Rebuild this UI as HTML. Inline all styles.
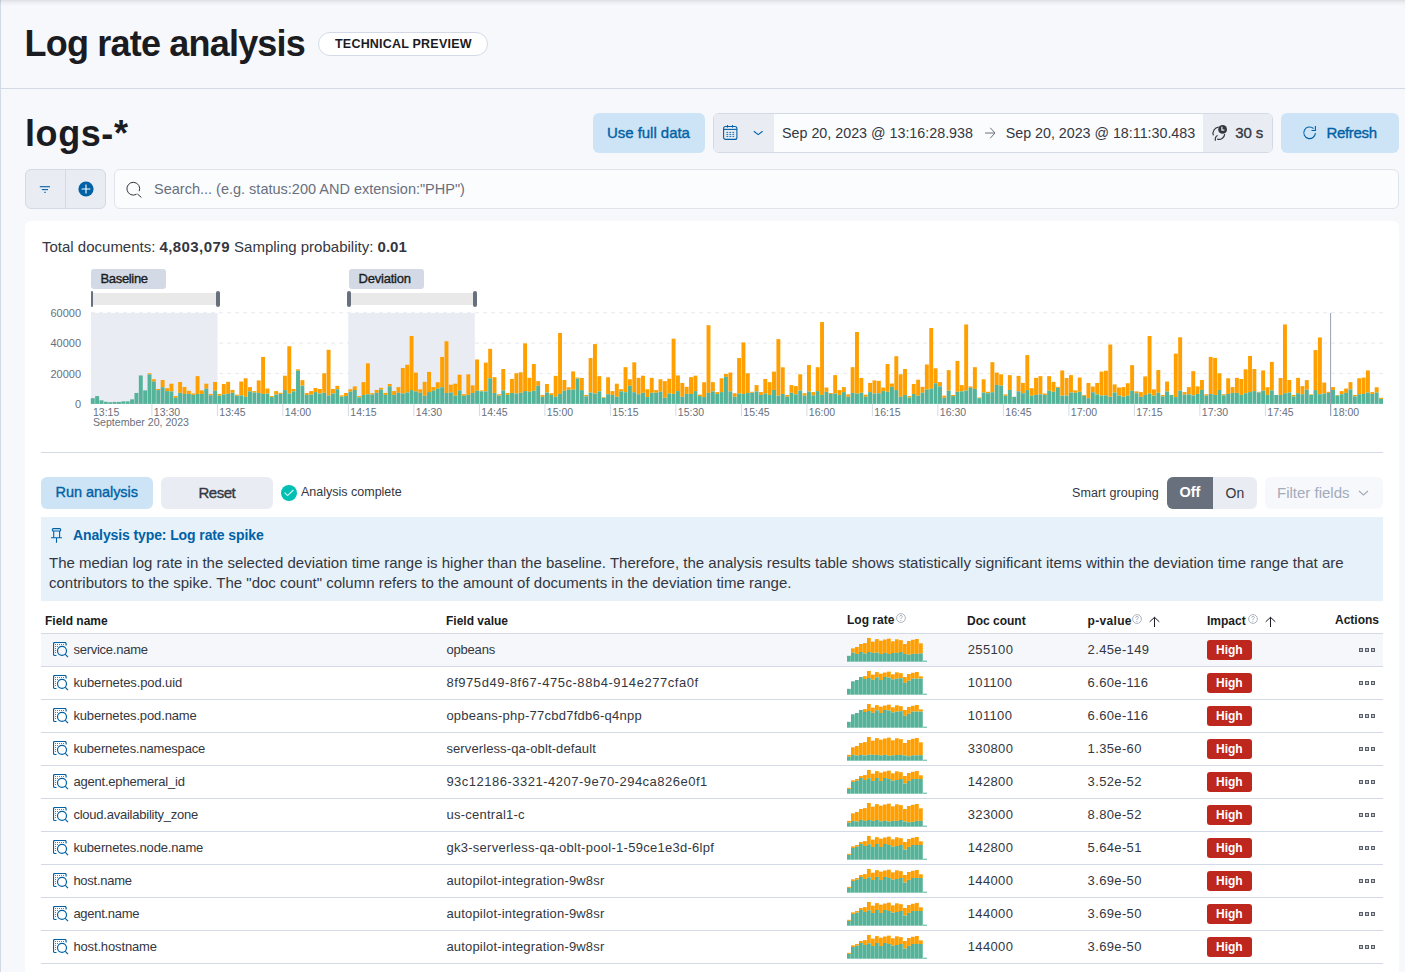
<!DOCTYPE html><html><head><meta charset="utf-8"><style>
*{box-sizing:border-box;margin:0;padding:0}
html,body{width:1405px;height:972px;overflow:hidden;background:#f7f8fc;font-family:"Liberation Sans", sans-serif;}
.a{position:absolute}
</style></head><body>

<div class="a" style="left:0;top:0;width:1px;height:972px;background:#d3dae6"></div>
<div class="a" style="left:0;top:0;width:1405px;height:6px;background:linear-gradient(rgba(40,45,60,0.13),rgba(40,45,60,0.05) 40%,rgba(40,45,60,0))"></div>
<div class="a" style="left:1px;top:88px;width:1404px;height:1px;background:#d3dae6"></div>
<div style="position:absolute;left:24.5px;top:21.93px;font-size:36px;line-height:43.20px;font-weight:700;color:#1a1c21;white-space:nowrap;letter-spacing:-0.8px">Log rate analysis</div>
<div class="a" style="left:318px;top:32px;width:170px;height:24px;border:1px solid #d3dae6;border-radius:12px;background:#fff"></div>
<div style="position:absolute;left:335px;top:36.97px;font-size:12.5px;line-height:15.00px;font-weight:700;color:#1a1c21;white-space:nowrap;;letter-spacing:0.211px;">TECHNICAL PREVIEW</div>
<div style="position:absolute;left:25px;top:111.93px;font-size:36px;line-height:43.20px;font-weight:700;color:#1a1c21;white-space:nowrap;;letter-spacing:0.584px;">logs-*</div>
<div class="a" style="left:593px;top:113px;width:112px;height:40px;border-radius:6px;background:#cce4f5"></div>
<div style="position:absolute;left:607px;top:124.30px;font-size:15px;line-height:18.00px;font-weight:400;color:#0061a6;white-space:nowrap;-webkit-text-stroke:0.35px currentColor;letter-spacing:-0.040px;">Use full data</div>
<div class="a" style="left:713px;top:113px;width:560px;height:40px;border:1px solid #d3dae6;border-radius:6px;background:#fbfcfd;overflow:hidden"><div class="a" style="left:0;top:0;width:60px;height:38px;background:#e9edf3"></div><div class="a" style="left:489px;top:0;width:70px;height:38px;background:#e9edf3"></div></div>
<svg class="a" style="left:721.5px;top:124.5px;" width="16" height="16" viewBox="0 0 16 16"><rect x="1.6" y="1.5" width="13.3" height="12.9" rx="2" fill="none" stroke="#0061a6" stroke-width="1.1"/><line x1="1.6" y1="4.4" x2="14.9" y2="4.4" stroke="#0061a6" stroke-width="1.1"/><line x1="5.5" y1="0" x2="5.5" y2="2.6" stroke="#0061a6" stroke-width="1.1"/><line x1="10.5" y1="0" x2="10.5" y2="2.6" stroke="#0061a6" stroke-width="1.1"/><rect x="4.4" y="6.9" width="1.8" height="0.9" fill="#0061a6"/><rect x="4.4" y="8.9" width="1.8" height="0.9" fill="#0061a6"/><rect x="4.4" y="10.9" width="1.8" height="0.9" fill="#0061a6"/><rect x="7.4" y="6.9" width="1.8" height="0.9" fill="#0061a6"/><rect x="7.4" y="8.9" width="1.8" height="0.9" fill="#0061a6"/><rect x="7.4" y="10.9" width="1.8" height="0.9" fill="#0061a6"/><rect x="10.4" y="6.9" width="1.8" height="0.9" fill="#0061a6"/><rect x="10.4" y="8.9" width="1.8" height="0.9" fill="#0061a6"/><rect x="10.4" y="10.9" width="1.8" height="0.9" fill="#0061a6"/></svg>
<svg class="a" style="left:752.5px;top:130px;" width="11" height="6" viewBox="0 0 11 6"><polyline points="0.8,1.2 5.2,4.6 9.6,1.2" fill="none" stroke="#0061a6" stroke-width="1.1"/></svg>
<div style="position:absolute;left:782px;top:125.17px;font-size:14.3px;line-height:17.16px;font-weight:400;color:#343741;white-space:nowrap;;letter-spacing:-0.002px;">Sep 20, 2023 @ 13:16:28.938</div>
<svg class="a" style="left:983.5px;top:126.5px;" width="12" height="12" viewBox="0 0 12 12"><path d="M1 6H11M6.3 0.8L11 6L6.3 11.2" fill="none" stroke="#69707d" stroke-width="1"/></svg>
<div style="position:absolute;left:1005.7px;top:125.17px;font-size:14.3px;line-height:17.16px;font-weight:400;color:#343741;white-space:nowrap;;letter-spacing:-0.018px;">Sep 20, 2023 @ 18:11:30.483</div>
<svg class="a" style="left:1211px;top:122px;" width="20" height="20" viewBox="0 0 20 20"><path d="M2.4 13.4A6.1 6.1 0 0 1 7.6 5.2" fill="none" stroke="#343741" stroke-width="1.2"/><path d="M13.7 12.1A5.8 5.8 0 0 1 6.2 17.1" fill="none" stroke="#343741" stroke-width="1.2"/><path d="M6.7 13.5Q3.9 14.5 4.3 18.8" fill="none" stroke="#343741" stroke-width="1.2"/><circle cx="11.6" cy="7.4" r="4.4" fill="#343741"/><path d="M10.9 4.7V8.2H13.4" fill="none" stroke="#e9edf3" stroke-width="1.2"/></svg>
<div style="position:absolute;left:1235.3px;top:124.30px;font-size:15px;line-height:18.00px;font-weight:400;color:#343741;white-space:nowrap;-webkit-text-stroke:0.35px currentColor;letter-spacing:-0.117px;">30 s</div>
<div class="a" style="left:1281px;top:113px;width:118px;height:40px;border-radius:6px;background:#cce4f5"></div>
<svg class="a" style="left:1302px;top:124px;" width="16" height="16" viewBox="0 0 16 16"><path d="M13.4 9A5.8 5.8 0 1 1 11.5 4.5" fill="none" stroke="#0061a6" stroke-width="1.1"/><path d="M13.4 2V6.5H9.5" fill="none" stroke="#0061a6" stroke-width="1.1"/></svg>
<div style="position:absolute;left:1326.5px;top:124.30px;font-size:15px;line-height:18.00px;font-weight:400;color:#0061a6;white-space:nowrap;-webkit-text-stroke:0.35px currentColor;letter-spacing:-0.333px;">Refresh</div>
<div class="a" style="left:25px;top:169px;width:81px;height:40px;border:1px solid #d3dae6;border-radius:6px;background:#e9edf3"></div>
<div class="a" style="left:65px;top:170px;width:1px;height:38px;background:#d3dae6"></div>
<svg class="a" style="left:39px;top:185px;" width="12" height="9" viewBox="0 0 12 9"><line x1="0.8" y1="1.7" x2="11" y2="1.7" stroke="#0061a6" stroke-width="1.1"/><line x1="2.8" y1="4.6" x2="9" y2="4.6" stroke="#0061a6" stroke-width="1.1"/><line x1="5.3" y1="7.4" x2="6.6" y2="7.4" stroke="#0061a6" stroke-width="1.1"/></svg>
<svg class="a" style="left:77.5px;top:180.5px;" width="16" height="16" viewBox="0 0 16 16"><circle cx="8" cy="8" r="7.6" fill="#0061a6"/><path d="M8 3.6V12.4M3.6 8H12.4" stroke="#fff" stroke-width="1.1"/></svg>
<div class="a" style="left:114px;top:169px;width:1285px;height:40px;border:1px solid #dfe3ea;border-radius:6px;background:#fbfcfd"></div>
<svg class="a" style="left:125px;top:181px;" width="18" height="18" viewBox="0 0 18 18"><path d="M11.6 13.2A6.4 6.4 0 1 1 14.2 10.2" fill="none" stroke="#343741" stroke-width="1"/><line x1="12.4" y1="13" x2="16.4" y2="16.4" stroke="#343741" stroke-width="1"/></svg>
<div style="position:absolute;left:154px;top:181.28px;font-size:14.5px;line-height:17.40px;font-weight:400;color:#69707d;white-space:nowrap;">Search... (e.g. status:200 AND extension:"PHP")</div>
<div class="a" style="left:25px;top:221px;width:1374px;height:800px;border-radius:6px;background:#fff"></div>
<div style="position:absolute;left:42px;top:237.80px;font-size:15px;line-height:18.00px;font-weight:400;color:#343741;white-space:nowrap;">Total documents: <b style="letter-spacing:0.4px">4,803,079</b> Sampling probability: <b style="letter-spacing:0.05px">0.01</b></div>
<div class="a" style="left:91px;top:269px;width:75px;height:20px;border-radius:3px;background:#d3dae6"></div>
<div style="position:absolute;left:100.5px;top:270.70px;font-size:13px;line-height:15.60px;font-weight:400;color:#1a1c21;white-space:nowrap;-webkit-text-stroke:0.35px currentColor;letter-spacing:-0.336px;">Baseline</div>
<div class="a" style="left:349px;top:269px;width:75px;height:20px;border-radius:3px;background:#d3dae6"></div>
<div style="position:absolute;left:358.5px;top:270.70px;font-size:13px;line-height:15.60px;font-weight:400;color:#1a1c21;white-space:nowrap;-webkit-text-stroke:0.35px currentColor;letter-spacing:-0.214px;">Deviation</div>
<div class="a" style="left:92px;top:293px;width:125px;height:12px;background:#e9e9ea"></div>
<div class="a" style="left:350px;top:293px;width:124px;height:12px;background:#e9e9ea"></div>
<div class="a" style="left:91px;top:291px;width:2px;height:16px;border-radius:2px;background:#69707d"></div>
<div class="a" style="left:215.7px;top:291px;width:4px;height:16px;border-radius:2px;background:#69707d"></div>
<div class="a" style="left:347px;top:291px;width:4px;height:16px;border-radius:2px;background:#69707d"></div>
<div class="a" style="left:473px;top:291px;width:4px;height:16px;border-radius:2px;background:#69707d"></div>
<svg style="position:absolute;left:0;top:0" width="1405" height="972"><line x1="91" y1="312.8" x2="1383" y2="312.8" stroke="#e6e9ef" stroke-width="1" stroke-dasharray="4 4"/><line x1="91" y1="343.1" x2="1383" y2="343.1" stroke="#e6e9ef" stroke-width="1" stroke-dasharray="4 4"/><line x1="91" y1="373.4" x2="1383" y2="373.4" stroke="#e6e9ef" stroke-width="1" stroke-dasharray="4 4"/><rect x="91" y="313" width="126.5" height="91" fill="#e9ecf2"/><rect x="348.3" y="313" width="126.5" height="91" fill="#e9ecf2"/><rect x="90.80" y="398.21" width="3.92" height="5.69" fill="#54b399"/><rect x="95.17" y="396.07" width="3.92" height="7.83" fill="#54b399"/><rect x="99.53" y="400.34" width="3.92" height="3.56" fill="#54b399"/><rect x="103.90" y="401.76" width="3.92" height="2.14" fill="#54b399"/><rect x="108.27" y="402.19" width="3.92" height="1.71" fill="#54b399"/><rect x="112.63" y="401.91" width="3.92" height="1.99" fill="#54b399"/><rect x="117.00" y="401.91" width="3.92" height="1.99" fill="#54b399"/><rect x="121.37" y="401.34" width="3.92" height="2.56" fill="#54b399"/><rect x="125.74" y="401.34" width="3.92" height="2.56" fill="#54b399"/><rect x="130.10" y="399.34" width="3.92" height="4.56" fill="#54b399"/><rect x="134.47" y="392.94" width="3.92" height="10.96" fill="#54b399"/><rect x="138.84" y="375.43" width="3.92" height="28.47" fill="#54b399"/><rect x="143.20" y="390.38" width="3.92" height="13.52" fill="#54b399"/><rect x="147.57" y="373.30" width="3.92" height="1.14" fill="#ffa000"/><rect x="147.57" y="374.43" width="3.92" height="29.47" fill="#54b399"/><rect x="151.94" y="379.27" width="3.92" height="2.28" fill="#ffa000"/><rect x="151.94" y="381.55" width="3.92" height="22.35" fill="#54b399"/><rect x="156.31" y="388.95" width="3.92" height="1.14" fill="#ffa000"/><rect x="156.31" y="390.09" width="3.92" height="13.81" fill="#54b399"/><rect x="160.67" y="379.99" width="3.92" height="7.26" fill="#ffa000"/><rect x="160.67" y="387.25" width="3.92" height="16.65" fill="#54b399"/><rect x="165.04" y="388.24" width="3.92" height="2.85" fill="#ffa000"/><rect x="165.04" y="391.09" width="3.92" height="12.81" fill="#54b399"/><rect x="169.41" y="383.69" width="3.92" height="7.83" fill="#ffa000"/><rect x="169.41" y="391.52" width="3.92" height="12.38" fill="#54b399"/><rect x="173.77" y="396.07" width="3.92" height="1.71" fill="#ffa000"/><rect x="173.77" y="397.78" width="3.92" height="6.12" fill="#54b399"/><rect x="178.14" y="381.98" width="3.92" height="10.82" fill="#ffa000"/><rect x="178.14" y="392.80" width="3.92" height="11.10" fill="#54b399"/><rect x="182.51" y="386.96" width="3.92" height="6.98" fill="#ffa000"/><rect x="182.51" y="393.94" width="3.92" height="9.96" fill="#54b399"/><rect x="186.87" y="390.80" width="3.92" height="3.13" fill="#ffa000"/><rect x="186.87" y="393.94" width="3.92" height="9.96" fill="#54b399"/><rect x="191.24" y="393.51" width="3.92" height="1.42" fill="#ffa000"/><rect x="191.24" y="394.93" width="3.92" height="8.97" fill="#54b399"/><rect x="195.61" y="376.14" width="3.92" height="17.79" fill="#ffa000"/><rect x="195.61" y="393.94" width="3.92" height="9.96" fill="#54b399"/><rect x="199.97" y="390.38" width="3.92" height="3.56" fill="#ffa000"/><rect x="199.97" y="393.94" width="3.92" height="9.96" fill="#54b399"/><rect x="204.34" y="383.69" width="3.92" height="4.98" fill="#ffa000"/><rect x="204.34" y="388.67" width="3.92" height="15.23" fill="#54b399"/><rect x="208.71" y="393.94" width="3.92" height="1.42" fill="#ffa000"/><rect x="208.71" y="395.36" width="3.92" height="8.54" fill="#54b399"/><rect x="213.08" y="381.98" width="3.92" height="8.68" fill="#ffa000"/><rect x="213.08" y="390.66" width="3.92" height="13.24" fill="#54b399"/><rect x="217.44" y="393.94" width="3.92" height="1.85" fill="#ffa000"/><rect x="217.44" y="395.79" width="3.92" height="8.11" fill="#54b399"/><rect x="221.81" y="383.97" width="3.92" height="10.39" fill="#ffa000"/><rect x="221.81" y="394.36" width="3.92" height="9.54" fill="#54b399"/><rect x="226.18" y="381.84" width="3.92" height="12.10" fill="#ffa000"/><rect x="226.18" y="393.94" width="3.92" height="9.96" fill="#54b399"/><rect x="230.54" y="389.95" width="3.92" height="2.85" fill="#ffa000"/><rect x="230.54" y="392.80" width="3.92" height="11.10" fill="#54b399"/><rect x="234.91" y="394.65" width="3.92" height="1.14" fill="#ffa000"/><rect x="234.91" y="395.79" width="3.92" height="8.11" fill="#54b399"/><rect x="239.28" y="381.55" width="3.92" height="13.81" fill="#ffa000"/><rect x="239.28" y="395.36" width="3.92" height="8.54" fill="#54b399"/><rect x="243.64" y="378.28" width="3.92" height="18.51" fill="#ffa000"/><rect x="243.64" y="396.78" width="3.92" height="7.12" fill="#54b399"/><rect x="248.01" y="387.10" width="3.92" height="4.27" fill="#ffa000"/><rect x="248.01" y="391.37" width="3.92" height="12.53" fill="#54b399"/><rect x="252.38" y="391.09" width="3.92" height="1.42" fill="#ffa000"/><rect x="252.38" y="392.51" width="3.92" height="11.39" fill="#54b399"/><rect x="256.75" y="380.41" width="3.92" height="12.53" fill="#ffa000"/><rect x="256.75" y="392.94" width="3.92" height="10.96" fill="#54b399"/><rect x="261.11" y="356.92" width="3.92" height="37.01" fill="#ffa000"/><rect x="261.11" y="393.94" width="3.92" height="9.96" fill="#54b399"/><rect x="265.48" y="388.53" width="3.92" height="4.98" fill="#ffa000"/><rect x="265.48" y="393.51" width="3.92" height="10.39" fill="#54b399"/><rect x="269.85" y="396.07" width="3.92" height="1.00" fill="#ffa000"/><rect x="269.85" y="397.07" width="3.92" height="6.83" fill="#54b399"/><rect x="274.21" y="391.09" width="3.92" height="3.56" fill="#ffa000"/><rect x="274.21" y="394.65" width="3.92" height="9.25" fill="#54b399"/><rect x="278.58" y="392.80" width="3.92" height="1.14" fill="#ffa000"/><rect x="278.58" y="393.94" width="3.92" height="9.96" fill="#54b399"/><rect x="282.95" y="375.71" width="3.92" height="14.38" fill="#ffa000"/><rect x="282.95" y="390.09" width="3.92" height="13.81" fill="#54b399"/><rect x="287.31" y="346.25" width="3.92" height="47.26" fill="#ffa000"/><rect x="287.31" y="393.51" width="3.92" height="10.39" fill="#54b399"/><rect x="291.68" y="388.95" width="3.92" height="2.42" fill="#ffa000"/><rect x="291.68" y="391.37" width="3.92" height="12.53" fill="#54b399"/><rect x="296.05" y="369.31" width="3.92" height="1.42" fill="#ffa000"/><rect x="296.05" y="370.73" width="3.92" height="33.17" fill="#54b399"/><rect x="300.42" y="380.13" width="3.92" height="5.55" fill="#ffa000"/><rect x="300.42" y="385.68" width="3.92" height="18.22" fill="#54b399"/><rect x="304.78" y="392.94" width="3.92" height="1.99" fill="#ffa000"/><rect x="304.78" y="394.93" width="3.92" height="8.97" fill="#54b399"/><rect x="309.15" y="391.09" width="3.92" height="3.56" fill="#ffa000"/><rect x="309.15" y="394.65" width="3.92" height="9.25" fill="#54b399"/><rect x="313.52" y="387.96" width="3.92" height="4.13" fill="#ffa000"/><rect x="313.52" y="392.09" width="3.92" height="11.81" fill="#54b399"/><rect x="317.88" y="388.95" width="3.92" height="4.56" fill="#ffa000"/><rect x="317.88" y="393.51" width="3.92" height="10.39" fill="#54b399"/><rect x="322.25" y="373.30" width="3.92" height="19.50" fill="#ffa000"/><rect x="322.25" y="392.80" width="3.92" height="11.10" fill="#54b399"/><rect x="326.62" y="349.81" width="3.92" height="45.55" fill="#ffa000"/><rect x="326.62" y="395.36" width="3.92" height="8.54" fill="#54b399"/><rect x="330.99" y="388.95" width="3.92" height="4.56" fill="#ffa000"/><rect x="330.99" y="393.51" width="3.92" height="10.39" fill="#54b399"/><rect x="335.35" y="385.82" width="3.92" height="3.42" fill="#ffa000"/><rect x="335.35" y="389.24" width="3.92" height="14.66" fill="#54b399"/><rect x="339.72" y="395.36" width="3.92" height="1.42" fill="#ffa000"/><rect x="339.72" y="396.78" width="3.92" height="7.12" fill="#54b399"/><rect x="344.09" y="392.94" width="3.92" height="3.13" fill="#ffa000"/><rect x="344.09" y="396.07" width="3.92" height="7.83" fill="#54b399"/><rect x="348.45" y="389.24" width="3.92" height="2.56" fill="#ffa000"/><rect x="348.45" y="391.80" width="3.92" height="12.10" fill="#54b399"/><rect x="352.82" y="386.39" width="3.92" height="3.56" fill="#ffa000"/><rect x="352.82" y="389.95" width="3.92" height="13.95" fill="#54b399"/><rect x="357.19" y="396.07" width="3.92" height="1.42" fill="#ffa000"/><rect x="357.19" y="397.49" width="3.92" height="6.41" fill="#54b399"/><rect x="361.55" y="382.12" width="3.92" height="12.81" fill="#ffa000"/><rect x="361.55" y="394.93" width="3.92" height="8.97" fill="#54b399"/><rect x="365.92" y="363.33" width="3.92" height="31.03" fill="#ffa000"/><rect x="365.92" y="394.36" width="3.92" height="9.54" fill="#54b399"/><rect x="370.29" y="393.22" width="3.92" height="1.42" fill="#ffa000"/><rect x="370.29" y="394.65" width="3.92" height="9.25" fill="#54b399"/><rect x="374.66" y="389.95" width="3.92" height="2.85" fill="#ffa000"/><rect x="374.66" y="392.80" width="3.92" height="11.10" fill="#54b399"/><rect x="379.02" y="387.81" width="3.92" height="1.85" fill="#ffa000"/><rect x="379.02" y="389.67" width="3.92" height="14.23" fill="#54b399"/><rect x="383.39" y="392.94" width="3.92" height="1.99" fill="#ffa000"/><rect x="383.39" y="394.93" width="3.92" height="8.97" fill="#54b399"/><rect x="387.76" y="383.97" width="3.92" height="2.42" fill="#ffa000"/><rect x="387.76" y="386.39" width="3.92" height="17.51" fill="#54b399"/><rect x="392.12" y="391.09" width="3.92" height="3.84" fill="#ffa000"/><rect x="392.12" y="394.93" width="3.92" height="8.97" fill="#54b399"/><rect x="396.49" y="387.10" width="3.92" height="5.69" fill="#ffa000"/><rect x="396.49" y="392.80" width="3.92" height="11.10" fill="#54b399"/><rect x="400.86" y="368.03" width="3.92" height="25.48" fill="#ffa000"/><rect x="400.86" y="393.51" width="3.92" height="10.39" fill="#54b399"/><rect x="405.22" y="364.75" width="3.92" height="27.76" fill="#ffa000"/><rect x="405.22" y="392.51" width="3.92" height="11.39" fill="#54b399"/><rect x="409.59" y="336.00" width="3.92" height="54.09" fill="#ffa000"/><rect x="409.59" y="390.09" width="3.92" height="13.81" fill="#54b399"/><rect x="413.96" y="372.58" width="3.92" height="18.93" fill="#ffa000"/><rect x="413.96" y="391.52" width="3.92" height="12.38" fill="#54b399"/><rect x="418.32" y="389.38" width="3.92" height="3.42" fill="#ffa000"/><rect x="418.32" y="392.80" width="3.92" height="11.10" fill="#54b399"/><rect x="422.69" y="381.84" width="3.92" height="13.95" fill="#ffa000"/><rect x="422.69" y="395.79" width="3.92" height="8.11" fill="#54b399"/><rect x="427.06" y="371.87" width="3.92" height="20.21" fill="#ffa000"/><rect x="427.06" y="392.09" width="3.92" height="11.81" fill="#54b399"/><rect x="431.43" y="387.10" width="3.92" height="3.56" fill="#ffa000"/><rect x="431.43" y="390.66" width="3.92" height="13.24" fill="#54b399"/><rect x="435.79" y="382.26" width="3.92" height="6.41" fill="#ffa000"/><rect x="435.79" y="388.67" width="3.92" height="15.23" fill="#54b399"/><rect x="440.16" y="356.92" width="3.92" height="30.32" fill="#ffa000"/><rect x="440.16" y="387.25" width="3.92" height="16.65" fill="#54b399"/><rect x="444.53" y="341.27" width="3.92" height="51.67" fill="#ffa000"/><rect x="444.53" y="392.94" width="3.92" height="10.96" fill="#54b399"/><rect x="448.89" y="384.68" width="3.92" height="7.83" fill="#ffa000"/><rect x="448.89" y="392.51" width="3.92" height="11.39" fill="#54b399"/><rect x="453.26" y="383.69" width="3.92" height="11.96" fill="#ffa000"/><rect x="453.26" y="395.64" width="3.92" height="8.26" fill="#54b399"/><rect x="457.63" y="374.72" width="3.92" height="15.66" fill="#ffa000"/><rect x="457.63" y="390.38" width="3.92" height="13.52" fill="#54b399"/><rect x="462.00" y="394.22" width="3.92" height="1.57" fill="#ffa000"/><rect x="462.00" y="395.79" width="3.92" height="8.11" fill="#54b399"/><rect x="466.36" y="374.29" width="3.92" height="20.64" fill="#ffa000"/><rect x="466.36" y="394.93" width="3.92" height="8.97" fill="#54b399"/><rect x="470.73" y="385.39" width="3.92" height="7.54" fill="#ffa000"/><rect x="470.73" y="392.94" width="3.92" height="10.96" fill="#54b399"/><rect x="475.10" y="359.49" width="3.92" height="31.17" fill="#ffa000"/><rect x="475.10" y="390.66" width="3.92" height="13.24" fill="#54b399"/><rect x="479.46" y="390.38" width="3.92" height="1.00" fill="#ffa000"/><rect x="479.46" y="391.37" width="3.92" height="12.53" fill="#54b399"/><rect x="483.83" y="362.62" width="3.92" height="28.75" fill="#ffa000"/><rect x="483.83" y="391.37" width="3.92" height="12.53" fill="#54b399"/><rect x="488.20" y="348.81" width="3.92" height="29.47" fill="#ffa000"/><rect x="488.20" y="378.28" width="3.92" height="25.62" fill="#54b399"/><rect x="492.56" y="377.14" width="3.92" height="15.80" fill="#ffa000"/><rect x="492.56" y="392.94" width="3.92" height="10.96" fill="#54b399"/><rect x="496.93" y="394.22" width="3.92" height="1.42" fill="#ffa000"/><rect x="496.93" y="395.64" width="3.92" height="8.26" fill="#54b399"/><rect x="501.30" y="369.02" width="3.92" height="21.35" fill="#ffa000"/><rect x="501.30" y="390.38" width="3.92" height="13.52" fill="#54b399"/><rect x="505.67" y="392.94" width="3.92" height="1.99" fill="#ffa000"/><rect x="505.67" y="394.93" width="3.92" height="8.97" fill="#54b399"/><rect x="510.03" y="378.99" width="3.92" height="13.95" fill="#ffa000"/><rect x="510.03" y="392.94" width="3.92" height="10.96" fill="#54b399"/><rect x="514.40" y="373.30" width="3.92" height="20.21" fill="#ffa000"/><rect x="514.40" y="393.51" width="3.92" height="10.39" fill="#54b399"/><rect x="518.77" y="372.30" width="3.92" height="20.50" fill="#ffa000"/><rect x="518.77" y="392.80" width="3.92" height="11.10" fill="#54b399"/><rect x="523.13" y="343.40" width="3.92" height="47.69" fill="#ffa000"/><rect x="523.13" y="391.09" width="3.92" height="12.81" fill="#54b399"/><rect x="527.50" y="377.85" width="3.92" height="13.95" fill="#ffa000"/><rect x="527.50" y="391.80" width="3.92" height="12.10" fill="#54b399"/><rect x="531.87" y="364.04" width="3.92" height="26.76" fill="#ffa000"/><rect x="531.87" y="390.80" width="3.92" height="13.10" fill="#54b399"/><rect x="536.23" y="381.12" width="3.92" height="4.70" fill="#ffa000"/><rect x="536.23" y="385.82" width="3.92" height="18.08" fill="#54b399"/><rect x="540.60" y="394.93" width="3.92" height="1.85" fill="#ffa000"/><rect x="540.60" y="396.78" width="3.92" height="7.12" fill="#54b399"/><rect x="544.97" y="383.97" width="3.92" height="8.54" fill="#ffa000"/><rect x="544.97" y="392.51" width="3.92" height="11.39" fill="#54b399"/><rect x="549.34" y="393.22" width="3.92" height="1.71" fill="#ffa000"/><rect x="549.34" y="394.93" width="3.92" height="8.97" fill="#54b399"/><rect x="553.70" y="375.86" width="3.92" height="20.93" fill="#ffa000"/><rect x="553.70" y="396.78" width="3.92" height="7.12" fill="#54b399"/><rect x="558.07" y="333.01" width="3.92" height="60.93" fill="#ffa000"/><rect x="558.07" y="393.94" width="3.92" height="9.96" fill="#54b399"/><rect x="562.44" y="379.99" width="3.92" height="10.82" fill="#ffa000"/><rect x="562.44" y="390.80" width="3.92" height="13.10" fill="#54b399"/><rect x="566.80" y="387.25" width="3.92" height="2.42" fill="#ffa000"/><rect x="566.80" y="389.67" width="3.92" height="14.23" fill="#54b399"/><rect x="571.17" y="371.44" width="3.92" height="18.22" fill="#ffa000"/><rect x="571.17" y="389.67" width="3.92" height="14.23" fill="#54b399"/><rect x="575.54" y="377.57" width="3.92" height="1.00" fill="#ffa000"/><rect x="575.54" y="378.56" width="3.92" height="25.34" fill="#54b399"/><rect x="579.90" y="377.99" width="3.92" height="12.10" fill="#ffa000"/><rect x="579.90" y="390.09" width="3.92" height="13.81" fill="#54b399"/><rect x="584.27" y="394.93" width="3.92" height="1.42" fill="#ffa000"/><rect x="584.27" y="396.36" width="3.92" height="7.54" fill="#54b399"/><rect x="588.64" y="358.06" width="3.92" height="34.45" fill="#ffa000"/><rect x="588.64" y="392.51" width="3.92" height="11.39" fill="#54b399"/><rect x="593.00" y="344.11" width="3.92" height="49.40" fill="#ffa000"/><rect x="593.00" y="393.51" width="3.92" height="10.39" fill="#54b399"/><rect x="597.37" y="376.14" width="3.92" height="15.23" fill="#ffa000"/><rect x="597.37" y="391.37" width="3.92" height="12.53" fill="#54b399"/><rect x="601.74" y="397.21" width="3.92" height="0.57" fill="#ffa000"/><rect x="601.74" y="397.78" width="3.92" height="6.12" fill="#54b399"/><rect x="606.11" y="377.28" width="3.92" height="16.94" fill="#ffa000"/><rect x="606.11" y="394.22" width="3.92" height="9.68" fill="#54b399"/><rect x="610.47" y="391.09" width="3.92" height="3.84" fill="#ffa000"/><rect x="610.47" y="394.93" width="3.92" height="8.97" fill="#54b399"/><rect x="614.84" y="383.69" width="3.92" height="13.10" fill="#ffa000"/><rect x="614.84" y="396.78" width="3.92" height="7.12" fill="#54b399"/><rect x="619.21" y="389.24" width="3.92" height="2.14" fill="#ffa000"/><rect x="619.21" y="391.37" width="3.92" height="12.53" fill="#54b399"/><rect x="623.57" y="367.17" width="3.92" height="25.05" fill="#ffa000"/><rect x="623.57" y="392.23" width="3.92" height="11.67" fill="#54b399"/><rect x="627.94" y="379.27" width="3.92" height="6.55" fill="#ffa000"/><rect x="627.94" y="385.82" width="3.92" height="18.08" fill="#54b399"/><rect x="632.31" y="362.33" width="3.92" height="29.89" fill="#ffa000"/><rect x="632.31" y="392.23" width="3.92" height="11.67" fill="#54b399"/><rect x="636.67" y="377.85" width="3.92" height="16.37" fill="#ffa000"/><rect x="636.67" y="394.22" width="3.92" height="9.68" fill="#54b399"/><rect x="641.04" y="375.71" width="3.92" height="17.08" fill="#ffa000"/><rect x="641.04" y="392.80" width="3.92" height="11.10" fill="#54b399"/><rect x="645.41" y="389.24" width="3.92" height="7.83" fill="#ffa000"/><rect x="645.41" y="397.07" width="3.92" height="6.83" fill="#54b399"/><rect x="649.78" y="377.85" width="3.92" height="14.95" fill="#ffa000"/><rect x="649.78" y="392.80" width="3.92" height="11.10" fill="#54b399"/><rect x="654.14" y="390.09" width="3.92" height="2.70" fill="#ffa000"/><rect x="654.14" y="392.80" width="3.92" height="11.10" fill="#54b399"/><rect x="658.51" y="379.27" width="3.92" height="12.53" fill="#ffa000"/><rect x="658.51" y="391.80" width="3.92" height="12.10" fill="#54b399"/><rect x="662.88" y="381.12" width="3.92" height="16.65" fill="#ffa000"/><rect x="662.88" y="397.78" width="3.92" height="6.12" fill="#54b399"/><rect x="667.24" y="378.70" width="3.92" height="14.80" fill="#ffa000"/><rect x="667.24" y="393.51" width="3.92" height="10.39" fill="#54b399"/><rect x="671.61" y="338.70" width="3.92" height="55.23" fill="#ffa000"/><rect x="671.61" y="393.94" width="3.92" height="9.96" fill="#54b399"/><rect x="675.98" y="375.43" width="3.92" height="15.66" fill="#ffa000"/><rect x="675.98" y="391.09" width="3.92" height="12.81" fill="#54b399"/><rect x="680.34" y="382.97" width="3.92" height="13.81" fill="#ffa000"/><rect x="680.34" y="396.78" width="3.92" height="7.12" fill="#54b399"/><rect x="684.71" y="386.82" width="3.92" height="7.12" fill="#ffa000"/><rect x="684.71" y="393.94" width="3.92" height="9.96" fill="#54b399"/><rect x="689.08" y="377.14" width="3.92" height="16.80" fill="#ffa000"/><rect x="689.08" y="393.94" width="3.92" height="9.96" fill="#54b399"/><rect x="693.45" y="375.71" width="3.92" height="15.37" fill="#ffa000"/><rect x="693.45" y="391.09" width="3.92" height="12.81" fill="#54b399"/><rect x="697.81" y="394.65" width="3.92" height="1.42" fill="#ffa000"/><rect x="697.81" y="396.07" width="3.92" height="7.83" fill="#54b399"/><rect x="702.18" y="382.26" width="3.92" height="14.80" fill="#ffa000"/><rect x="702.18" y="397.07" width="3.92" height="6.83" fill="#54b399"/><rect x="706.55" y="325.18" width="3.92" height="67.76" fill="#ffa000"/><rect x="706.55" y="392.94" width="3.92" height="10.96" fill="#54b399"/><rect x="710.91" y="382.12" width="3.92" height="9.25" fill="#ffa000"/><rect x="710.91" y="391.37" width="3.92" height="12.53" fill="#54b399"/><rect x="715.28" y="392.09" width="3.92" height="1.85" fill="#ffa000"/><rect x="715.28" y="393.94" width="3.92" height="9.96" fill="#54b399"/><rect x="719.65" y="378.28" width="3.92" height="13.81" fill="#ffa000"/><rect x="719.65" y="392.09" width="3.92" height="11.81" fill="#54b399"/><rect x="724.01" y="374.01" width="3.92" height="2.85" fill="#ffa000"/><rect x="724.01" y="376.85" width="3.92" height="27.05" fill="#54b399"/><rect x="728.38" y="372.58" width="3.92" height="18.79" fill="#ffa000"/><rect x="728.38" y="391.37" width="3.92" height="12.53" fill="#54b399"/><rect x="732.75" y="393.22" width="3.92" height="3.56" fill="#ffa000"/><rect x="732.75" y="396.78" width="3.92" height="7.12" fill="#54b399"/><rect x="737.12" y="358.06" width="3.92" height="35.44" fill="#ffa000"/><rect x="737.12" y="393.51" width="3.92" height="10.39" fill="#54b399"/><rect x="741.48" y="342.41" width="3.92" height="51.53" fill="#ffa000"/><rect x="741.48" y="393.94" width="3.92" height="9.96" fill="#54b399"/><rect x="745.85" y="373.30" width="3.92" height="19.64" fill="#ffa000"/><rect x="745.85" y="392.94" width="3.92" height="10.96" fill="#54b399"/><rect x="750.22" y="391.80" width="3.92" height="1.00" fill="#ffa000"/><rect x="750.22" y="392.80" width="3.92" height="11.10" fill="#54b399"/><rect x="754.58" y="385.11" width="3.92" height="6.26" fill="#ffa000"/><rect x="754.58" y="391.37" width="3.92" height="12.53" fill="#54b399"/><rect x="758.95" y="392.09" width="3.92" height="2.85" fill="#ffa000"/><rect x="758.95" y="394.93" width="3.92" height="8.97" fill="#54b399"/><rect x="763.32" y="378.99" width="3.92" height="14.52" fill="#ffa000"/><rect x="763.32" y="393.51" width="3.92" height="10.39" fill="#54b399"/><rect x="767.68" y="382.12" width="3.92" height="12.81" fill="#ffa000"/><rect x="767.68" y="394.93" width="3.92" height="8.97" fill="#54b399"/><rect x="772.05" y="371.59" width="3.92" height="18.36" fill="#ffa000"/><rect x="772.05" y="389.95" width="3.92" height="13.95" fill="#54b399"/><rect x="776.42" y="339.13" width="3.92" height="56.51" fill="#ffa000"/><rect x="776.42" y="395.64" width="3.92" height="8.26" fill="#54b399"/><rect x="780.79" y="367.32" width="3.92" height="26.62" fill="#ffa000"/><rect x="780.79" y="393.94" width="3.92" height="9.96" fill="#54b399"/><rect x="785.15" y="394.93" width="3.92" height="1.85" fill="#ffa000"/><rect x="785.15" y="396.78" width="3.92" height="7.12" fill="#54b399"/><rect x="789.52" y="385.11" width="3.92" height="7.69" fill="#ffa000"/><rect x="789.52" y="392.80" width="3.92" height="11.10" fill="#54b399"/><rect x="793.89" y="386.11" width="3.92" height="8.26" fill="#ffa000"/><rect x="793.89" y="394.36" width="3.92" height="9.54" fill="#54b399"/><rect x="798.25" y="374.29" width="3.92" height="16.37" fill="#ffa000"/><rect x="798.25" y="390.66" width="3.92" height="13.24" fill="#54b399"/><rect x="802.62" y="393.22" width="3.92" height="2.42" fill="#ffa000"/><rect x="802.62" y="395.64" width="3.92" height="8.26" fill="#54b399"/><rect x="806.99" y="365.04" width="3.92" height="26.48" fill="#ffa000"/><rect x="806.99" y="391.52" width="3.92" height="12.38" fill="#54b399"/><rect x="811.35" y="392.09" width="3.92" height="3.27" fill="#ffa000"/><rect x="811.35" y="395.36" width="3.92" height="8.54" fill="#54b399"/><rect x="815.72" y="367.17" width="3.92" height="23.91" fill="#ffa000"/><rect x="815.72" y="391.09" width="3.92" height="12.81" fill="#54b399"/><rect x="820.09" y="322.05" width="3.92" height="72.88" fill="#ffa000"/><rect x="820.09" y="394.93" width="3.92" height="8.97" fill="#54b399"/><rect x="824.46" y="387.53" width="3.92" height="4.27" fill="#ffa000"/><rect x="824.46" y="391.80" width="3.92" height="12.10" fill="#54b399"/><rect x="828.82" y="392.94" width="3.92" height="1.00" fill="#ffa000"/><rect x="828.82" y="393.94" width="3.92" height="9.96" fill="#54b399"/><rect x="833.19" y="375.15" width="3.92" height="18.36" fill="#ffa000"/><rect x="833.19" y="393.51" width="3.92" height="10.39" fill="#54b399"/><rect x="837.56" y="390.09" width="3.92" height="4.98" fill="#ffa000"/><rect x="837.56" y="395.07" width="3.92" height="8.83" fill="#54b399"/><rect x="841.92" y="387.10" width="3.92" height="4.98" fill="#ffa000"/><rect x="841.92" y="392.09" width="3.92" height="11.81" fill="#54b399"/><rect x="846.29" y="394.36" width="3.92" height="2.42" fill="#ffa000"/><rect x="846.29" y="396.78" width="3.92" height="7.12" fill="#54b399"/><rect x="850.66" y="367.17" width="3.92" height="25.77" fill="#ffa000"/><rect x="850.66" y="392.94" width="3.92" height="10.96" fill="#54b399"/><rect x="855.02" y="332.01" width="3.92" height="61.64" fill="#ffa000"/><rect x="855.02" y="393.65" width="3.92" height="10.25" fill="#54b399"/><rect x="859.39" y="377.99" width="3.92" height="14.80" fill="#ffa000"/><rect x="859.39" y="392.80" width="3.92" height="11.10" fill="#54b399"/><rect x="863.76" y="394.65" width="3.92" height="2.14" fill="#ffa000"/><rect x="863.76" y="396.78" width="3.92" height="7.12" fill="#54b399"/><rect x="868.13" y="382.97" width="3.92" height="9.11" fill="#ffa000"/><rect x="868.13" y="392.09" width="3.92" height="11.81" fill="#54b399"/><rect x="872.49" y="380.41" width="3.92" height="13.10" fill="#ffa000"/><rect x="872.49" y="393.51" width="3.92" height="10.39" fill="#54b399"/><rect x="876.86" y="380.84" width="3.92" height="12.38" fill="#ffa000"/><rect x="876.86" y="393.22" width="3.92" height="10.68" fill="#54b399"/><rect x="881.23" y="387.53" width="3.92" height="3.56" fill="#ffa000"/><rect x="881.23" y="391.09" width="3.92" height="12.81" fill="#54b399"/><rect x="885.59" y="364.04" width="3.92" height="27.76" fill="#ffa000"/><rect x="885.59" y="391.80" width="3.92" height="12.10" fill="#54b399"/><rect x="889.96" y="383.54" width="3.92" height="3.27" fill="#ffa000"/><rect x="889.96" y="386.82" width="3.92" height="17.08" fill="#54b399"/><rect x="894.33" y="356.21" width="3.92" height="33.88" fill="#ffa000"/><rect x="894.33" y="390.09" width="3.92" height="13.81" fill="#54b399"/><rect x="898.69" y="374.29" width="3.92" height="22.49" fill="#ffa000"/><rect x="898.69" y="396.78" width="3.92" height="7.12" fill="#54b399"/><rect x="903.06" y="369.02" width="3.92" height="25.91" fill="#ffa000"/><rect x="903.06" y="394.93" width="3.92" height="8.97" fill="#54b399"/><rect x="907.43" y="396.07" width="3.92" height="1.42" fill="#ffa000"/><rect x="907.43" y="397.49" width="3.92" height="6.41" fill="#54b399"/><rect x="911.80" y="383.97" width="3.92" height="9.96" fill="#ffa000"/><rect x="911.80" y="393.94" width="3.92" height="9.96" fill="#54b399"/><rect x="916.16" y="379.70" width="3.92" height="16.09" fill="#ffa000"/><rect x="916.16" y="395.79" width="3.92" height="8.11" fill="#54b399"/><rect x="920.53" y="386.82" width="3.92" height="5.98" fill="#ffa000"/><rect x="920.53" y="392.80" width="3.92" height="11.10" fill="#54b399"/><rect x="924.90" y="364.47" width="3.92" height="25.20" fill="#ffa000"/><rect x="924.90" y="389.67" width="3.92" height="14.23" fill="#54b399"/><rect x="929.26" y="328.03" width="3.92" height="60.64" fill="#ffa000"/><rect x="929.26" y="388.67" width="3.92" height="15.23" fill="#54b399"/><rect x="933.63" y="368.31" width="3.92" height="14.95" fill="#ffa000"/><rect x="933.63" y="383.26" width="3.92" height="20.64" fill="#54b399"/><rect x="938.00" y="382.12" width="3.92" height="4.27" fill="#ffa000"/><rect x="938.00" y="386.39" width="3.92" height="17.51" fill="#54b399"/><rect x="942.37" y="395.64" width="3.92" height="2.14" fill="#ffa000"/><rect x="942.37" y="397.78" width="3.92" height="6.12" fill="#54b399"/><rect x="946.73" y="370.16" width="3.92" height="20.50" fill="#ffa000"/><rect x="946.73" y="390.66" width="3.92" height="13.24" fill="#54b399"/><rect x="951.10" y="394.93" width="3.92" height="1.14" fill="#ffa000"/><rect x="951.10" y="396.07" width="3.92" height="7.83" fill="#54b399"/><rect x="955.47" y="360.91" width="3.92" height="30.89" fill="#ffa000"/><rect x="955.47" y="391.80" width="3.92" height="12.10" fill="#54b399"/><rect x="959.83" y="385.11" width="3.92" height="6.26" fill="#ffa000"/><rect x="959.83" y="391.37" width="3.92" height="12.53" fill="#54b399"/><rect x="964.20" y="324.47" width="3.92" height="66.19" fill="#ffa000"/><rect x="964.20" y="390.66" width="3.92" height="13.24" fill="#54b399"/><rect x="968.57" y="386.39" width="3.92" height="1.42" fill="#ffa000"/><rect x="968.57" y="387.81" width="3.92" height="16.09" fill="#54b399"/><rect x="972.93" y="367.17" width="3.92" height="21.78" fill="#ffa000"/><rect x="972.93" y="388.95" width="3.92" height="14.95" fill="#54b399"/><rect x="977.30" y="397.49" width="3.92" height="0.71" fill="#ffa000"/><rect x="977.30" y="398.21" width="3.92" height="5.69" fill="#54b399"/><rect x="981.67" y="379.27" width="3.92" height="13.24" fill="#ffa000"/><rect x="981.67" y="392.51" width="3.92" height="11.39" fill="#54b399"/><rect x="986.03" y="391.80" width="3.92" height="1.42" fill="#ffa000"/><rect x="986.03" y="393.22" width="3.92" height="10.68" fill="#54b399"/><rect x="990.40" y="362.19" width="3.92" height="30.04" fill="#ffa000"/><rect x="990.40" y="392.23" width="3.92" height="11.67" fill="#54b399"/><rect x="994.77" y="372.58" width="3.92" height="12.38" fill="#ffa000"/><rect x="994.77" y="384.97" width="3.92" height="18.93" fill="#54b399"/><rect x="999.14" y="374.29" width="3.92" height="11.39" fill="#ffa000"/><rect x="999.14" y="385.68" width="3.92" height="18.22" fill="#54b399"/><rect x="1003.50" y="394.36" width="3.92" height="1.42" fill="#ffa000"/><rect x="1003.50" y="395.79" width="3.92" height="8.11" fill="#54b399"/><rect x="1007.87" y="375.15" width="3.92" height="14.80" fill="#ffa000"/><rect x="1007.87" y="389.95" width="3.92" height="13.95" fill="#54b399"/><rect x="1012.24" y="396.78" width="3.92" height="7.12" fill="#54b399"/><rect x="1016.60" y="375.86" width="3.92" height="15.52" fill="#ffa000"/><rect x="1016.60" y="391.37" width="3.92" height="12.53" fill="#54b399"/><rect x="1020.97" y="382.97" width="3.92" height="10.25" fill="#ffa000"/><rect x="1020.97" y="393.22" width="3.92" height="10.68" fill="#54b399"/><rect x="1025.34" y="355.07" width="3.92" height="35.02" fill="#ffa000"/><rect x="1025.34" y="390.09" width="3.92" height="13.81" fill="#54b399"/><rect x="1029.70" y="388.24" width="3.92" height="7.54" fill="#ffa000"/><rect x="1029.70" y="395.79" width="3.92" height="8.11" fill="#54b399"/><rect x="1034.07" y="377.85" width="3.92" height="17.08" fill="#ffa000"/><rect x="1034.07" y="394.93" width="3.92" height="8.97" fill="#54b399"/><rect x="1038.44" y="376.14" width="3.92" height="18.22" fill="#ffa000"/><rect x="1038.44" y="394.36" width="3.92" height="9.54" fill="#54b399"/><rect x="1042.81" y="393.51" width="3.92" height="1.42" fill="#ffa000"/><rect x="1042.81" y="394.93" width="3.92" height="8.97" fill="#54b399"/><rect x="1047.17" y="376.14" width="3.92" height="14.52" fill="#ffa000"/><rect x="1047.17" y="390.66" width="3.92" height="13.24" fill="#54b399"/><rect x="1051.54" y="381.84" width="3.92" height="9.96" fill="#ffa000"/><rect x="1051.54" y="391.80" width="3.92" height="12.10" fill="#54b399"/><rect x="1055.91" y="386.82" width="3.92" height="1.00" fill="#ffa000"/><rect x="1055.91" y="387.81" width="3.92" height="16.09" fill="#54b399"/><rect x="1060.27" y="370.45" width="3.92" height="25.20" fill="#ffa000"/><rect x="1060.27" y="395.64" width="3.92" height="8.26" fill="#54b399"/><rect x="1064.64" y="377.99" width="3.92" height="17.65" fill="#ffa000"/><rect x="1064.64" y="395.64" width="3.92" height="8.26" fill="#54b399"/><rect x="1069.01" y="375.15" width="3.92" height="17.37" fill="#ffa000"/><rect x="1069.01" y="392.51" width="3.92" height="11.39" fill="#54b399"/><rect x="1073.38" y="390.38" width="3.92" height="2.42" fill="#ffa000"/><rect x="1073.38" y="392.80" width="3.92" height="11.10" fill="#54b399"/><rect x="1077.74" y="377.57" width="3.92" height="14.23" fill="#ffa000"/><rect x="1077.74" y="391.80" width="3.92" height="12.10" fill="#54b399"/><rect x="1082.11" y="394.93" width="3.92" height="0.85" fill="#ffa000"/><rect x="1082.11" y="395.79" width="3.92" height="8.11" fill="#54b399"/><rect x="1086.48" y="382.97" width="3.92" height="15.23" fill="#ffa000"/><rect x="1086.48" y="398.21" width="3.92" height="5.69" fill="#54b399"/><rect x="1090.84" y="386.53" width="3.92" height="5.69" fill="#ffa000"/><rect x="1090.84" y="392.23" width="3.92" height="11.67" fill="#54b399"/><rect x="1095.21" y="382.97" width="3.92" height="11.39" fill="#ffa000"/><rect x="1095.21" y="394.36" width="3.92" height="9.54" fill="#54b399"/><rect x="1099.58" y="371.59" width="3.92" height="24.06" fill="#ffa000"/><rect x="1099.58" y="395.64" width="3.92" height="8.26" fill="#54b399"/><rect x="1103.94" y="370.73" width="3.92" height="24.63" fill="#ffa000"/><rect x="1103.94" y="395.36" width="3.92" height="8.54" fill="#54b399"/><rect x="1108.31" y="344.54" width="3.92" height="52.24" fill="#ffa000"/><rect x="1108.31" y="396.78" width="3.92" height="7.12" fill="#54b399"/><rect x="1112.68" y="384.40" width="3.92" height="8.11" fill="#ffa000"/><rect x="1112.68" y="392.51" width="3.92" height="11.39" fill="#54b399"/><rect x="1117.04" y="387.53" width="3.92" height="8.11" fill="#ffa000"/><rect x="1117.04" y="395.64" width="3.92" height="8.26" fill="#54b399"/><rect x="1121.41" y="387.10" width="3.92" height="9.68" fill="#ffa000"/><rect x="1121.41" y="396.78" width="3.92" height="7.12" fill="#54b399"/><rect x="1125.78" y="383.26" width="3.92" height="12.53" fill="#ffa000"/><rect x="1125.78" y="395.79" width="3.92" height="8.11" fill="#54b399"/><rect x="1130.15" y="365.18" width="3.92" height="25.62" fill="#ffa000"/><rect x="1130.15" y="390.80" width="3.92" height="13.10" fill="#54b399"/><rect x="1134.51" y="391.37" width="3.92" height="1.85" fill="#ffa000"/><rect x="1134.51" y="393.22" width="3.92" height="10.68" fill="#54b399"/><rect x="1138.88" y="392.09" width="3.92" height="4.70" fill="#ffa000"/><rect x="1138.88" y="396.78" width="3.92" height="7.12" fill="#54b399"/><rect x="1143.25" y="376.43" width="3.92" height="18.51" fill="#ffa000"/><rect x="1143.25" y="394.93" width="3.92" height="8.97" fill="#54b399"/><rect x="1147.61" y="336.00" width="3.92" height="57.51" fill="#ffa000"/><rect x="1147.61" y="393.51" width="3.92" height="10.39" fill="#54b399"/><rect x="1151.98" y="389.38" width="3.92" height="6.26" fill="#ffa000"/><rect x="1151.98" y="395.64" width="3.92" height="8.26" fill="#54b399"/><rect x="1156.35" y="370.02" width="3.92" height="22.78" fill="#ffa000"/><rect x="1156.35" y="392.80" width="3.92" height="11.10" fill="#54b399"/><rect x="1160.71" y="394.93" width="3.92" height="1.42" fill="#ffa000"/><rect x="1160.71" y="396.36" width="3.92" height="7.54" fill="#54b399"/><rect x="1165.08" y="381.55" width="3.92" height="9.96" fill="#ffa000"/><rect x="1165.08" y="391.52" width="3.92" height="12.38" fill="#54b399"/><rect x="1169.45" y="394.93" width="3.92" height="8.97" fill="#54b399"/><rect x="1173.82" y="353.65" width="3.92" height="43.42" fill="#ffa000"/><rect x="1173.82" y="397.07" width="3.92" height="6.83" fill="#54b399"/><rect x="1178.18" y="337.28" width="3.92" height="53.38" fill="#ffa000"/><rect x="1178.18" y="390.66" width="3.92" height="13.24" fill="#54b399"/><rect x="1182.55" y="392.09" width="3.92" height="2.56" fill="#ffa000"/><rect x="1182.55" y="394.65" width="3.92" height="9.25" fill="#54b399"/><rect x="1186.92" y="387.10" width="3.92" height="7.26" fill="#ffa000"/><rect x="1186.92" y="394.36" width="3.92" height="9.54" fill="#54b399"/><rect x="1191.28" y="371.16" width="3.92" height="24.20" fill="#ffa000"/><rect x="1191.28" y="395.36" width="3.92" height="8.54" fill="#54b399"/><rect x="1195.65" y="386.39" width="3.92" height="7.54" fill="#ffa000"/><rect x="1195.65" y="393.94" width="3.92" height="9.96" fill="#54b399"/><rect x="1200.02" y="379.99" width="3.92" height="9.96" fill="#ffa000"/><rect x="1200.02" y="389.95" width="3.92" height="13.95" fill="#54b399"/><rect x="1204.38" y="394.22" width="3.92" height="1.42" fill="#ffa000"/><rect x="1204.38" y="395.64" width="3.92" height="8.26" fill="#54b399"/><rect x="1208.75" y="356.92" width="3.92" height="37.01" fill="#ffa000"/><rect x="1208.75" y="393.94" width="3.92" height="9.96" fill="#54b399"/><rect x="1213.12" y="357.92" width="3.92" height="37.01" fill="#ffa000"/><rect x="1213.12" y="394.93" width="3.92" height="8.97" fill="#54b399"/><rect x="1217.49" y="373.30" width="3.92" height="16.65" fill="#ffa000"/><rect x="1217.49" y="389.95" width="3.92" height="13.95" fill="#54b399"/><rect x="1221.85" y="394.22" width="3.92" height="1.14" fill="#ffa000"/><rect x="1221.85" y="395.36" width="3.92" height="8.54" fill="#54b399"/><rect x="1226.22" y="378.28" width="3.92" height="15.66" fill="#ffa000"/><rect x="1226.22" y="393.94" width="3.92" height="9.96" fill="#54b399"/><rect x="1230.59" y="387.10" width="3.92" height="5.84" fill="#ffa000"/><rect x="1230.59" y="392.94" width="3.92" height="10.96" fill="#54b399"/><rect x="1234.95" y="377.85" width="3.92" height="15.09" fill="#ffa000"/><rect x="1234.95" y="392.94" width="3.92" height="10.96" fill="#54b399"/><rect x="1239.32" y="378.99" width="3.92" height="15.94" fill="#ffa000"/><rect x="1239.32" y="394.93" width="3.92" height="8.97" fill="#54b399"/><rect x="1243.69" y="369.31" width="3.92" height="23.91" fill="#ffa000"/><rect x="1243.69" y="393.22" width="3.92" height="10.68" fill="#54b399"/><rect x="1248.06" y="355.93" width="3.92" height="36.16" fill="#ffa000"/><rect x="1248.06" y="392.09" width="3.92" height="11.81" fill="#54b399"/><rect x="1252.42" y="369.02" width="3.92" height="22.06" fill="#ffa000"/><rect x="1252.42" y="391.09" width="3.92" height="12.81" fill="#54b399"/><rect x="1256.79" y="391.80" width="3.92" height="0.71" fill="#ffa000"/><rect x="1256.79" y="392.51" width="3.92" height="11.39" fill="#54b399"/><rect x="1261.16" y="370.45" width="3.92" height="20.21" fill="#ffa000"/><rect x="1261.16" y="390.66" width="3.92" height="13.24" fill="#54b399"/><rect x="1265.52" y="387.25" width="3.92" height="7.69" fill="#ffa000"/><rect x="1265.52" y="394.93" width="3.92" height="8.97" fill="#54b399"/><rect x="1269.89" y="361.91" width="3.92" height="28.47" fill="#ffa000"/><rect x="1269.89" y="390.38" width="3.92" height="13.52" fill="#54b399"/><rect x="1274.26" y="394.93" width="3.92" height="8.97" fill="#54b399"/><rect x="1278.62" y="377.99" width="3.92" height="16.94" fill="#ffa000"/><rect x="1278.62" y="394.93" width="3.92" height="8.97" fill="#54b399"/><rect x="1282.99" y="324.47" width="3.92" height="68.75" fill="#ffa000"/><rect x="1282.99" y="393.22" width="3.92" height="10.68" fill="#54b399"/><rect x="1287.36" y="379.99" width="3.92" height="12.53" fill="#ffa000"/><rect x="1287.36" y="392.51" width="3.92" height="11.39" fill="#54b399"/><rect x="1291.72" y="394.93" width="3.92" height="1.57" fill="#ffa000"/><rect x="1291.72" y="396.50" width="3.92" height="7.40" fill="#54b399"/><rect x="1296.09" y="377.85" width="3.92" height="15.37" fill="#ffa000"/><rect x="1296.09" y="393.22" width="3.92" height="10.68" fill="#54b399"/><rect x="1300.46" y="386.11" width="3.92" height="8.11" fill="#ffa000"/><rect x="1300.46" y="394.22" width="3.92" height="9.68" fill="#54b399"/><rect x="1304.83" y="380.13" width="3.92" height="9.54" fill="#ffa000"/><rect x="1304.83" y="389.67" width="3.92" height="14.23" fill="#54b399"/><rect x="1309.19" y="394.36" width="3.92" height="0.57" fill="#ffa000"/><rect x="1309.19" y="394.93" width="3.92" height="8.97" fill="#54b399"/><rect x="1313.56" y="350.09" width="3.92" height="40.00" fill="#ffa000"/><rect x="1313.56" y="390.09" width="3.92" height="13.81" fill="#54b399"/><rect x="1317.93" y="337.42" width="3.92" height="56.80" fill="#ffa000"/><rect x="1317.93" y="394.22" width="3.92" height="9.68" fill="#54b399"/><rect x="1322.29" y="382.55" width="3.92" height="10.96" fill="#ffa000"/><rect x="1322.29" y="393.51" width="3.92" height="10.39" fill="#54b399"/><rect x="1326.66" y="391.80" width="3.92" height="1.14" fill="#ffa000"/><rect x="1326.66" y="392.94" width="3.92" height="10.96" fill="#54b399"/><rect x="1331.03" y="387.10" width="3.92" height="2.85" fill="#ffa000"/><rect x="1331.03" y="389.95" width="3.92" height="13.95" fill="#54b399"/><rect x="1335.39" y="394.93" width="3.92" height="0.71" fill="#ffa000"/><rect x="1335.39" y="395.64" width="3.92" height="8.26" fill="#54b399"/><rect x="1339.76" y="391.09" width="3.92" height="3.13" fill="#ffa000"/><rect x="1339.76" y="394.22" width="3.92" height="9.68" fill="#54b399"/><rect x="1344.13" y="388.53" width="3.92" height="4.41" fill="#ffa000"/><rect x="1344.13" y="392.94" width="3.92" height="10.96" fill="#54b399"/><rect x="1348.50" y="382.12" width="3.92" height="7.26" fill="#ffa000"/><rect x="1348.50" y="389.38" width="3.92" height="14.52" fill="#54b399"/><rect x="1352.86" y="394.93" width="3.92" height="1.42" fill="#ffa000"/><rect x="1352.86" y="396.36" width="3.92" height="7.54" fill="#54b399"/><rect x="1357.23" y="378.28" width="3.92" height="15.94" fill="#ffa000"/><rect x="1357.23" y="394.22" width="3.92" height="9.68" fill="#54b399"/><rect x="1361.60" y="377.57" width="3.92" height="16.37" fill="#ffa000"/><rect x="1361.60" y="393.94" width="3.92" height="9.96" fill="#54b399"/><rect x="1365.96" y="370.45" width="3.92" height="22.06" fill="#ffa000"/><rect x="1365.96" y="392.51" width="3.92" height="11.39" fill="#54b399"/><rect x="1370.33" y="392.09" width="3.92" height="1.85" fill="#ffa000"/><rect x="1370.33" y="393.94" width="3.92" height="9.96" fill="#54b399"/><rect x="1374.70" y="387.25" width="3.92" height="5.27" fill="#ffa000"/><rect x="1374.70" y="392.51" width="3.92" height="11.39" fill="#54b399"/><rect x="1379.07" y="397.78" width="3.92" height="1.14" fill="#ffa000"/><rect x="1379.07" y="398.92" width="3.92" height="4.98" fill="#54b399"/><line x1="151.9" y1="404" x2="151.9" y2="416" stroke="#d3dae6" stroke-width="1"/><line x1="217.4" y1="404" x2="217.4" y2="416" stroke="#d3dae6" stroke-width="1"/><line x1="282.9" y1="404" x2="282.9" y2="416" stroke="#d3dae6" stroke-width="1"/><line x1="348.4" y1="404" x2="348.4" y2="416" stroke="#d3dae6" stroke-width="1"/><line x1="413.9" y1="404" x2="413.9" y2="416" stroke="#d3dae6" stroke-width="1"/><line x1="479.4" y1="404" x2="479.4" y2="416" stroke="#d3dae6" stroke-width="1"/><line x1="544.9" y1="404" x2="544.9" y2="416" stroke="#d3dae6" stroke-width="1"/><line x1="610.4" y1="404" x2="610.4" y2="416" stroke="#d3dae6" stroke-width="1"/><line x1="675.9" y1="404" x2="675.9" y2="416" stroke="#d3dae6" stroke-width="1"/><line x1="741.4" y1="404" x2="741.4" y2="416" stroke="#d3dae6" stroke-width="1"/><line x1="806.9" y1="404" x2="806.9" y2="416" stroke="#d3dae6" stroke-width="1"/><line x1="872.4" y1="404" x2="872.4" y2="416" stroke="#d3dae6" stroke-width="1"/><line x1="937.9" y1="404" x2="937.9" y2="416" stroke="#d3dae6" stroke-width="1"/><line x1="1003.4" y1="404" x2="1003.4" y2="416" stroke="#d3dae6" stroke-width="1"/><line x1="1068.9" y1="404" x2="1068.9" y2="416" stroke="#d3dae6" stroke-width="1"/><line x1="1134.4" y1="404" x2="1134.4" y2="416" stroke="#d3dae6" stroke-width="1"/><line x1="1199.9" y1="404" x2="1199.9" y2="416" stroke="#d3dae6" stroke-width="1"/><line x1="1265.4" y1="404" x2="1265.4" y2="416" stroke="#d3dae6" stroke-width="1"/><line x1="1330.9" y1="404" x2="1330.9" y2="416" stroke="#d3dae6" stroke-width="1"/><line x1="1330.6" y1="313" x2="1330.6" y2="416" stroke="#98a2b3" stroke-width="1"/></svg>
<div class="a" style="left:0;width:81px;top:306px;height:14px;line-height:14px;text-align:right;font-size:11px;color:#69707d">60000</div>
<div class="a" style="left:0;width:81px;top:336px;height:14px;line-height:14px;text-align:right;font-size:11px;color:#69707d">40000</div>
<div class="a" style="left:0;width:81px;top:366.5px;height:14px;line-height:14px;text-align:right;font-size:11px;color:#69707d">20000</div>
<div class="a" style="left:0;width:81px;top:397px;height:14px;line-height:14px;text-align:right;font-size:11px;color:#69707d">0</div>
<div style="position:absolute;left:93px;top:405.66px;font-size:10.5px;line-height:12.60px;font-weight:400;color:#69707d;white-space:nowrap;">13:15</div>
<div style="position:absolute;left:153.8px;top:405.66px;font-size:10.5px;line-height:12.60px;font-weight:400;color:#69707d;white-space:nowrap;">13:30</div>
<div style="position:absolute;left:219.3px;top:405.66px;font-size:10.5px;line-height:12.60px;font-weight:400;color:#69707d;white-space:nowrap;">13:45</div>
<div style="position:absolute;left:284.8px;top:405.66px;font-size:10.5px;line-height:12.60px;font-weight:400;color:#69707d;white-space:nowrap;">14:00</div>
<div style="position:absolute;left:350.3px;top:405.66px;font-size:10.5px;line-height:12.60px;font-weight:400;color:#69707d;white-space:nowrap;">14:15</div>
<div style="position:absolute;left:415.8px;top:405.66px;font-size:10.5px;line-height:12.60px;font-weight:400;color:#69707d;white-space:nowrap;">14:30</div>
<div style="position:absolute;left:481.3px;top:405.66px;font-size:10.5px;line-height:12.60px;font-weight:400;color:#69707d;white-space:nowrap;">14:45</div>
<div style="position:absolute;left:546.8px;top:405.66px;font-size:10.5px;line-height:12.60px;font-weight:400;color:#69707d;white-space:nowrap;">15:00</div>
<div style="position:absolute;left:612.3px;top:405.66px;font-size:10.5px;line-height:12.60px;font-weight:400;color:#69707d;white-space:nowrap;">15:15</div>
<div style="position:absolute;left:677.8px;top:405.66px;font-size:10.5px;line-height:12.60px;font-weight:400;color:#69707d;white-space:nowrap;">15:30</div>
<div style="position:absolute;left:743.3px;top:405.66px;font-size:10.5px;line-height:12.60px;font-weight:400;color:#69707d;white-space:nowrap;">15:45</div>
<div style="position:absolute;left:808.8px;top:405.66px;font-size:10.5px;line-height:12.60px;font-weight:400;color:#69707d;white-space:nowrap;">16:00</div>
<div style="position:absolute;left:874.3px;top:405.66px;font-size:10.5px;line-height:12.60px;font-weight:400;color:#69707d;white-space:nowrap;">16:15</div>
<div style="position:absolute;left:939.8px;top:405.66px;font-size:10.5px;line-height:12.60px;font-weight:400;color:#69707d;white-space:nowrap;">16:30</div>
<div style="position:absolute;left:1005.3px;top:405.66px;font-size:10.5px;line-height:12.60px;font-weight:400;color:#69707d;white-space:nowrap;">16:45</div>
<div style="position:absolute;left:1070.8px;top:405.66px;font-size:10.5px;line-height:12.60px;font-weight:400;color:#69707d;white-space:nowrap;">17:00</div>
<div style="position:absolute;left:1136.3px;top:405.66px;font-size:10.5px;line-height:12.60px;font-weight:400;color:#69707d;white-space:nowrap;">17:15</div>
<div style="position:absolute;left:1201.8px;top:405.66px;font-size:10.5px;line-height:12.60px;font-weight:400;color:#69707d;white-space:nowrap;">17:30</div>
<div style="position:absolute;left:1267.3px;top:405.66px;font-size:10.5px;line-height:12.60px;font-weight:400;color:#69707d;white-space:nowrap;">17:45</div>
<div style="position:absolute;left:1332.8px;top:405.66px;font-size:10.5px;line-height:12.60px;font-weight:400;color:#69707d;white-space:nowrap;">18:00</div>
<div style="position:absolute;left:93px;top:415.97px;font-size:10.6px;line-height:12.72px;font-weight:400;color:#69707d;white-space:nowrap;">September 20, 2023</div>
<div class="a" style="left:41px;top:452px;width:1342px;height:1px;background:#d3dae6"></div>
<div class="a" style="left:41px;top:477px;width:112px;height:32px;border-radius:6px;background:#cce4f5"></div>
<div style="position:absolute;left:55.5px;top:484.28px;font-size:14.5px;line-height:17.40px;font-weight:400;color:#0061a6;white-space:nowrap;-webkit-text-stroke:0.35px currentColor;letter-spacing:-0.047px;">Run analysis</div>
<div class="a" style="left:161px;top:477px;width:112px;height:32px;border-radius:6px;background:#e9edf3"></div>
<div style="position:absolute;left:198.4px;top:483.80px;font-size:15px;line-height:18.00px;font-weight:400;color:#343741;white-space:nowrap;-webkit-text-stroke:0.35px currentColor;letter-spacing:-0.463px;">Reset</div>
<svg class="a" style="left:281px;top:485px;" width="16" height="16" viewBox="0 0 16 16"><circle cx="8" cy="8" r="8" fill="#00bfb3"/><path d="M3.6 7.6L6.6 10.6L12.4 5" fill="none" stroke="#e6f9f7" stroke-width="1.1"/></svg>
<div style="position:absolute;left:301px;top:485.17px;font-size:12.5px;line-height:15.00px;font-weight:400;color:#343741;white-space:nowrap;">Analysis complete</div>
<div style="position:absolute;left:1072.1px;top:486.17px;font-size:12.5px;line-height:15.00px;font-weight:400;color:#343741;white-space:nowrap;;letter-spacing:0.089px;">Smart grouping</div>
<div class="a" style="left:1167px;top:477px;width:90px;height:32px;border-radius:6px;background:#e9edf3;overflow:hidden"><div class="a" style="left:0;top:0;width:46px;height:32px;background:#69707d"></div></div>
<div style="position:absolute;left:1179.5px;top:484.28px;font-size:14.5px;line-height:17.40px;font-weight:700;color:#fff;white-space:nowrap;">Off</div>
<div style="position:absolute;left:1225.5px;top:484.75px;font-size:14px;line-height:16.80px;font-weight:400;color:#343741;white-space:nowrap;">On</div>
<div class="a" style="left:1265px;top:477px;width:118px;height:32px;border-radius:6px;background:#f7f8fc"></div>
<div style="position:absolute;left:1277px;top:483.80px;font-size:15px;line-height:18.00px;font-weight:400;color:#a2abba;white-space:nowrap;">Filter fields</div>
<svg class="a" style="left:1358px;top:490px;" width="11" height="6" viewBox="0 0 11 6"><polyline points="1,1 5.5,5 10,1" fill="none" stroke="#a2abba" stroke-width="1.1"/></svg>
<div class="a" style="left:41px;top:517px;width:1342px;height:84px;background:#e6f1fa"></div>
<svg class="a" style="left:50px;top:527px;" width="13" height="17" viewBox="0 0 13 17"><rect x="2.3" y="1.6" width="8.4" height="2.4" rx="1" fill="none" stroke="#0061a6" stroke-width="1.1"/><path d="M3.7 4V10.5M9.6 4V10.5M1 10.8H12M6.5 10.8V15.8" fill="none" stroke="#0061a6" stroke-width="1.1"/></svg>
<div style="position:absolute;left:73px;top:526.75px;font-size:14px;line-height:16.80px;font-weight:700;color:#0061a6;white-space:nowrap;;letter-spacing:-0.109px;">Analysis type: Log rate spike</div>
<div style="position:absolute;left:49px;top:553.80px;font-size:15px;line-height:18.00px;font-weight:400;color:#343741;white-space:nowrap;">The median log rate in the selected deviation time range is higher than the baseline. Therefore, the analysis results table shows statistically significant items within the deviation time range that are</div>
<div style="position:absolute;left:49px;top:573.80px;font-size:15px;line-height:18.00px;font-weight:400;color:#343741;white-space:nowrap;">contributors to the spike. The "doc count" column refers to the amount of documents in the deviation time range.</div>
<div style="position:absolute;left:45px;top:613.64px;font-size:12px;line-height:14.40px;font-weight:700;color:#1a1c21;white-space:nowrap;">Field name</div>
<div style="position:absolute;left:446px;top:613.64px;font-size:12px;line-height:14.40px;font-weight:700;color:#1a1c21;white-space:nowrap;">Field value</div>
<div style="position:absolute;left:847px;top:612.64px;font-size:12px;line-height:14.40px;font-weight:700;color:#1a1c21;white-space:nowrap;">Log rate</div>
<svg class="a" style="left:896px;top:613px;" width="10" height="10" viewBox="0 0 10 10"><circle cx="5" cy="5" r="4.4" fill="none" stroke="#98a2b3" stroke-width="0.8"/><path d="M3.6 3.7Q3.8 2.4 5.1 2.4Q6.4 2.5 6.4 3.6Q6.3 4.4 5.3 5Q4.9 5.3 4.9 6.1" fill="none" stroke="#98a2b3" stroke-width="0.8"/><circle cx="4.9" cy="7.6" r="0.5" fill="#98a2b3"/></svg>
<div style="position:absolute;left:967px;top:613.64px;font-size:12px;line-height:14.40px;font-weight:700;color:#1a1c21;white-space:nowrap;">Doc count</div>
<div style="position:absolute;left:1087.5px;top:613.64px;font-size:12px;line-height:14.40px;font-weight:700;color:#1a1c21;white-space:nowrap;;letter-spacing:0.333px;">p-value</div>
<svg class="a" style="left:1132px;top:614px;" width="10" height="10" viewBox="0 0 10 10"><circle cx="5" cy="5" r="4.4" fill="none" stroke="#98a2b3" stroke-width="0.8"/><path d="M3.6 3.7Q3.8 2.4 5.1 2.4Q6.4 2.5 6.4 3.6Q6.3 4.4 5.3 5Q4.9 5.3 4.9 6.1" fill="none" stroke="#98a2b3" stroke-width="0.8"/><circle cx="4.9" cy="7.6" r="0.5" fill="#98a2b3"/></svg>
<svg class="a" style="left:1149px;top:615.5px;" width="11" height="11" viewBox="0 0 11 11"><path d="M5.5 11V1.3M0.7 5.8L5.5 1.3L10.3 5.8" fill="none" stroke="#1a1c21" stroke-width="1"/></svg>
<div style="position:absolute;left:1207px;top:613.64px;font-size:12px;line-height:14.40px;font-weight:700;color:#1a1c21;white-space:nowrap;">Impact</div>
<svg class="a" style="left:1248px;top:614px;" width="10" height="10" viewBox="0 0 10 10"><circle cx="5" cy="5" r="4.4" fill="none" stroke="#98a2b3" stroke-width="0.8"/><path d="M3.6 3.7Q3.8 2.4 5.1 2.4Q6.4 2.5 6.4 3.6Q6.3 4.4 5.3 5Q4.9 5.3 4.9 6.1" fill="none" stroke="#98a2b3" stroke-width="0.8"/><circle cx="4.9" cy="7.6" r="0.5" fill="#98a2b3"/></svg>
<svg class="a" style="left:1265px;top:615.5px;" width="11" height="11" viewBox="0 0 11 11"><path d="M5.5 11V1.3M0.7 5.8L5.5 1.3L10.3 5.8" fill="none" stroke="#1a1c21" stroke-width="1"/></svg>
<div style="position:absolute;left:1335px;top:612.64px;font-size:12px;line-height:14.40px;font-weight:700;color:#1a1c21;white-space:nowrap;">Actions</div>
<div class="a" style="left:41px;top:633px;width:1342px;height:1px;background:#d3dae6"></div>
<div class="a" style="left:41px;top:634px;width:1342px;height:32px;background:#f5f7fa"></div>
<div class="a" style="left:41px;top:666px;width:1342px;height:1px;background:#d3dae6"></div>
<svg class="a" style="left:53px;top:642px;" width="16" height="16" viewBox="0 0 16 16"><path d="M3.5 13.5H1.8Q0.5 13.5 0.5 12.2V1.9Q0.5 0.4 2 0.4H11.6Q13.1 0.4 13.1 1.9V3.5" fill="none" stroke="#0061a6" stroke-width="1.2"/><circle cx="2.5" cy="2.5" r="0.5" fill="#0061a6"/><circle cx="4.5" cy="2.5" r="0.5" fill="#0061a6"/><circle cx="6.5" cy="2.5" r="0.5" fill="#0061a6"/><circle cx="8.5" cy="2.5" r="0.5" fill="#0061a6"/><circle cx="10.5" cy="2.5" r="0.5" fill="#0061a6"/><circle cx="2.5" cy="4.5" r="0.5" fill="#0061a6"/><circle cx="2.5" cy="6.5" r="0.5" fill="#0061a6"/><circle cx="2.5" cy="8.5" r="0.5" fill="#0061a6"/><circle cx="2.5" cy="10.5" r="0.5" fill="#0061a6"/><circle cx="4.5" cy="4.5" r="0.5" fill="#0061a6"/><circle cx="9" cy="8.8" r="4.5" fill="none" stroke="#0061a6" stroke-width="1.2"/><line x1="12.3" y1="12.3" x2="15" y2="15.2" stroke="#0061a6" stroke-width="1.2"/></svg>
<div style="position:absolute;left:73.4px;top:641.70px;font-size:13px;line-height:15.60px;font-weight:400;color:#343741;white-space:nowrap;;letter-spacing:-0.244px;">service.name</div>
<div style="position:absolute;left:446.4px;top:641.70px;font-size:13px;line-height:15.60px;font-weight:400;color:#343741;white-space:nowrap;;letter-spacing:-0.176px;">opbeans</div>
<div style="position:absolute;left:967.8px;top:641.70px;font-size:13px;line-height:15.60px;font-weight:400;color:#343741;white-space:nowrap;;letter-spacing:0.338px;">255100</div>
<div style="position:absolute;left:1087.6px;top:641.70px;font-size:13px;line-height:15.60px;font-weight:400;color:#343741;white-space:nowrap;;letter-spacing:0.359px;">2.45e-149</div>
<div class="a" style="left:1207px;top:640px;width:45px;height:20px;border-radius:3px;background:#bd271e"></div>
<div style="position:absolute;left:1216px;top:642.64px;font-size:12px;line-height:14.40px;font-weight:700;color:#fff;white-space:nowrap;">High</div>
<svg class="a" style="left:1359px;top:648px;" width="16" height="4" viewBox="0 0 16 4"><rect x="0.6" y="0.6" width="2.8" height="2.8" fill="none" stroke="#5a606b" stroke-width="1.2"/><rect x="6.6" y="0.6" width="2.8" height="2.8" fill="none" stroke="#5a606b" stroke-width="1.2"/><rect x="12.6" y="0.6" width="2.8" height="2.8" fill="none" stroke="#5a606b" stroke-width="1.2"/></svg>
<div class="a" style="left:41px;top:699px;width:1342px;height:1px;background:#d3dae6"></div>
<svg class="a" style="left:53px;top:675px;" width="16" height="16" viewBox="0 0 16 16"><path d="M3.5 13.5H1.8Q0.5 13.5 0.5 12.2V1.9Q0.5 0.4 2 0.4H11.6Q13.1 0.4 13.1 1.9V3.5" fill="none" stroke="#0061a6" stroke-width="1.2"/><circle cx="2.5" cy="2.5" r="0.5" fill="#0061a6"/><circle cx="4.5" cy="2.5" r="0.5" fill="#0061a6"/><circle cx="6.5" cy="2.5" r="0.5" fill="#0061a6"/><circle cx="8.5" cy="2.5" r="0.5" fill="#0061a6"/><circle cx="10.5" cy="2.5" r="0.5" fill="#0061a6"/><circle cx="2.5" cy="4.5" r="0.5" fill="#0061a6"/><circle cx="2.5" cy="6.5" r="0.5" fill="#0061a6"/><circle cx="2.5" cy="8.5" r="0.5" fill="#0061a6"/><circle cx="2.5" cy="10.5" r="0.5" fill="#0061a6"/><circle cx="4.5" cy="4.5" r="0.5" fill="#0061a6"/><circle cx="9" cy="8.8" r="4.5" fill="none" stroke="#0061a6" stroke-width="1.2"/><line x1="12.3" y1="12.3" x2="15" y2="15.2" stroke="#0061a6" stroke-width="1.2"/></svg>
<div style="position:absolute;left:73.4px;top:674.70px;font-size:13px;line-height:15.60px;font-weight:400;color:#343741;white-space:nowrap;;letter-spacing:-0.104px;">kubernetes.pod.uid</div>
<div style="position:absolute;left:446.4px;top:674.70px;font-size:13px;line-height:15.60px;font-weight:400;color:#343741;white-space:nowrap;;letter-spacing:0.541px;">8f975d49-8f67-475c-88b4-914e277cfa0f</div>
<div style="position:absolute;left:967.8px;top:674.70px;font-size:13px;line-height:15.60px;font-weight:400;color:#343741;white-space:nowrap;;letter-spacing:0.331px;">101100</div>
<div style="position:absolute;left:1087.6px;top:674.70px;font-size:13px;line-height:15.60px;font-weight:400;color:#343741;white-space:nowrap;;letter-spacing:0.353px;">6.60e-116</div>
<div class="a" style="left:1207px;top:673px;width:45px;height:20px;border-radius:3px;background:#bd271e"></div>
<div style="position:absolute;left:1216px;top:675.64px;font-size:12px;line-height:14.40px;font-weight:700;color:#fff;white-space:nowrap;">High</div>
<svg class="a" style="left:1359px;top:681px;" width="16" height="4" viewBox="0 0 16 4"><rect x="0.6" y="0.6" width="2.8" height="2.8" fill="none" stroke="#5a606b" stroke-width="1.2"/><rect x="6.6" y="0.6" width="2.8" height="2.8" fill="none" stroke="#5a606b" stroke-width="1.2"/><rect x="12.6" y="0.6" width="2.8" height="2.8" fill="none" stroke="#5a606b" stroke-width="1.2"/></svg>
<div class="a" style="left:41px;top:732px;width:1342px;height:1px;background:#d3dae6"></div>
<svg class="a" style="left:53px;top:708px;" width="16" height="16" viewBox="0 0 16 16"><path d="M3.5 13.5H1.8Q0.5 13.5 0.5 12.2V1.9Q0.5 0.4 2 0.4H11.6Q13.1 0.4 13.1 1.9V3.5" fill="none" stroke="#0061a6" stroke-width="1.2"/><circle cx="2.5" cy="2.5" r="0.5" fill="#0061a6"/><circle cx="4.5" cy="2.5" r="0.5" fill="#0061a6"/><circle cx="6.5" cy="2.5" r="0.5" fill="#0061a6"/><circle cx="8.5" cy="2.5" r="0.5" fill="#0061a6"/><circle cx="10.5" cy="2.5" r="0.5" fill="#0061a6"/><circle cx="2.5" cy="4.5" r="0.5" fill="#0061a6"/><circle cx="2.5" cy="6.5" r="0.5" fill="#0061a6"/><circle cx="2.5" cy="8.5" r="0.5" fill="#0061a6"/><circle cx="2.5" cy="10.5" r="0.5" fill="#0061a6"/><circle cx="4.5" cy="4.5" r="0.5" fill="#0061a6"/><circle cx="9" cy="8.8" r="4.5" fill="none" stroke="#0061a6" stroke-width="1.2"/><line x1="12.3" y1="12.3" x2="15" y2="15.2" stroke="#0061a6" stroke-width="1.2"/></svg>
<div style="position:absolute;left:73.4px;top:707.70px;font-size:13px;line-height:15.60px;font-weight:400;color:#343741;white-space:nowrap;;letter-spacing:-0.132px;">kubernetes.pod.name</div>
<div style="position:absolute;left:446.4px;top:707.70px;font-size:13px;line-height:15.60px;font-weight:400;color:#343741;white-space:nowrap;;letter-spacing:0.245px;">opbeans-php-77cbd7fdb6-q4npp</div>
<div style="position:absolute;left:967.8px;top:707.70px;font-size:13px;line-height:15.60px;font-weight:400;color:#343741;white-space:nowrap;;letter-spacing:0.331px;">101100</div>
<div style="position:absolute;left:1087.6px;top:707.70px;font-size:13px;line-height:15.60px;font-weight:400;color:#343741;white-space:nowrap;;letter-spacing:0.353px;">6.60e-116</div>
<div class="a" style="left:1207px;top:706px;width:45px;height:20px;border-radius:3px;background:#bd271e"></div>
<div style="position:absolute;left:1216px;top:708.64px;font-size:12px;line-height:14.40px;font-weight:700;color:#fff;white-space:nowrap;">High</div>
<svg class="a" style="left:1359px;top:714px;" width="16" height="4" viewBox="0 0 16 4"><rect x="0.6" y="0.6" width="2.8" height="2.8" fill="none" stroke="#5a606b" stroke-width="1.2"/><rect x="6.6" y="0.6" width="2.8" height="2.8" fill="none" stroke="#5a606b" stroke-width="1.2"/><rect x="12.6" y="0.6" width="2.8" height="2.8" fill="none" stroke="#5a606b" stroke-width="1.2"/></svg>
<div class="a" style="left:41px;top:765px;width:1342px;height:1px;background:#d3dae6"></div>
<svg class="a" style="left:53px;top:741px;" width="16" height="16" viewBox="0 0 16 16"><path d="M3.5 13.5H1.8Q0.5 13.5 0.5 12.2V1.9Q0.5 0.4 2 0.4H11.6Q13.1 0.4 13.1 1.9V3.5" fill="none" stroke="#0061a6" stroke-width="1.2"/><circle cx="2.5" cy="2.5" r="0.5" fill="#0061a6"/><circle cx="4.5" cy="2.5" r="0.5" fill="#0061a6"/><circle cx="6.5" cy="2.5" r="0.5" fill="#0061a6"/><circle cx="8.5" cy="2.5" r="0.5" fill="#0061a6"/><circle cx="10.5" cy="2.5" r="0.5" fill="#0061a6"/><circle cx="2.5" cy="4.5" r="0.5" fill="#0061a6"/><circle cx="2.5" cy="6.5" r="0.5" fill="#0061a6"/><circle cx="2.5" cy="8.5" r="0.5" fill="#0061a6"/><circle cx="2.5" cy="10.5" r="0.5" fill="#0061a6"/><circle cx="4.5" cy="4.5" r="0.5" fill="#0061a6"/><circle cx="9" cy="8.8" r="4.5" fill="none" stroke="#0061a6" stroke-width="1.2"/><line x1="12.3" y1="12.3" x2="15" y2="15.2" stroke="#0061a6" stroke-width="1.2"/></svg>
<div style="position:absolute;left:73.4px;top:740.70px;font-size:13px;line-height:15.60px;font-weight:400;color:#343741;white-space:nowrap;;letter-spacing:-0.170px;">kubernetes.namespace</div>
<div style="position:absolute;left:446.4px;top:740.70px;font-size:13px;line-height:15.60px;font-weight:400;color:#343741;white-space:nowrap;;letter-spacing:0.108px;">serverless-qa-oblt-default</div>
<div style="position:absolute;left:967.8px;top:740.70px;font-size:13px;line-height:15.60px;font-weight:400;color:#343741;white-space:nowrap;;letter-spacing:0.338px;">330800</div>
<div style="position:absolute;left:1087.6px;top:740.70px;font-size:13px;line-height:15.60px;font-weight:400;color:#343741;white-space:nowrap;;letter-spacing:0.359px;">1.35e-60</div>
<div class="a" style="left:1207px;top:739px;width:45px;height:20px;border-radius:3px;background:#bd271e"></div>
<div style="position:absolute;left:1216px;top:741.64px;font-size:12px;line-height:14.40px;font-weight:700;color:#fff;white-space:nowrap;">High</div>
<svg class="a" style="left:1359px;top:747px;" width="16" height="4" viewBox="0 0 16 4"><rect x="0.6" y="0.6" width="2.8" height="2.8" fill="none" stroke="#5a606b" stroke-width="1.2"/><rect x="6.6" y="0.6" width="2.8" height="2.8" fill="none" stroke="#5a606b" stroke-width="1.2"/><rect x="12.6" y="0.6" width="2.8" height="2.8" fill="none" stroke="#5a606b" stroke-width="1.2"/></svg>
<div class="a" style="left:41px;top:798px;width:1342px;height:1px;background:#d3dae6"></div>
<svg class="a" style="left:53px;top:774px;" width="16" height="16" viewBox="0 0 16 16"><path d="M3.5 13.5H1.8Q0.5 13.5 0.5 12.2V1.9Q0.5 0.4 2 0.4H11.6Q13.1 0.4 13.1 1.9V3.5" fill="none" stroke="#0061a6" stroke-width="1.2"/><circle cx="2.5" cy="2.5" r="0.5" fill="#0061a6"/><circle cx="4.5" cy="2.5" r="0.5" fill="#0061a6"/><circle cx="6.5" cy="2.5" r="0.5" fill="#0061a6"/><circle cx="8.5" cy="2.5" r="0.5" fill="#0061a6"/><circle cx="10.5" cy="2.5" r="0.5" fill="#0061a6"/><circle cx="2.5" cy="4.5" r="0.5" fill="#0061a6"/><circle cx="2.5" cy="6.5" r="0.5" fill="#0061a6"/><circle cx="2.5" cy="8.5" r="0.5" fill="#0061a6"/><circle cx="2.5" cy="10.5" r="0.5" fill="#0061a6"/><circle cx="4.5" cy="4.5" r="0.5" fill="#0061a6"/><circle cx="9" cy="8.8" r="4.5" fill="none" stroke="#0061a6" stroke-width="1.2"/><line x1="12.3" y1="12.3" x2="15" y2="15.2" stroke="#0061a6" stroke-width="1.2"/></svg>
<div style="position:absolute;left:73.4px;top:773.70px;font-size:13px;line-height:15.60px;font-weight:400;color:#343741;white-space:nowrap;;letter-spacing:-0.201px;">agent.ephemeral_id</div>
<div style="position:absolute;left:446.4px;top:773.70px;font-size:13px;line-height:15.60px;font-weight:400;color:#343741;white-space:nowrap;;letter-spacing:0.494px;">93c12186-3321-4207-9e70-294ca826e0f1</div>
<div style="position:absolute;left:967.8px;top:773.70px;font-size:13px;line-height:15.60px;font-weight:400;color:#343741;white-space:nowrap;;letter-spacing:0.338px;">142800</div>
<div style="position:absolute;left:1087.6px;top:773.70px;font-size:13px;line-height:15.60px;font-weight:400;color:#343741;white-space:nowrap;;letter-spacing:0.359px;">3.52e-52</div>
<div class="a" style="left:1207px;top:772px;width:45px;height:20px;border-radius:3px;background:#bd271e"></div>
<div style="position:absolute;left:1216px;top:774.64px;font-size:12px;line-height:14.40px;font-weight:700;color:#fff;white-space:nowrap;">High</div>
<svg class="a" style="left:1359px;top:780px;" width="16" height="4" viewBox="0 0 16 4"><rect x="0.6" y="0.6" width="2.8" height="2.8" fill="none" stroke="#5a606b" stroke-width="1.2"/><rect x="6.6" y="0.6" width="2.8" height="2.8" fill="none" stroke="#5a606b" stroke-width="1.2"/><rect x="12.6" y="0.6" width="2.8" height="2.8" fill="none" stroke="#5a606b" stroke-width="1.2"/></svg>
<div class="a" style="left:41px;top:831px;width:1342px;height:1px;background:#d3dae6"></div>
<svg class="a" style="left:53px;top:807px;" width="16" height="16" viewBox="0 0 16 16"><path d="M3.5 13.5H1.8Q0.5 13.5 0.5 12.2V1.9Q0.5 0.4 2 0.4H11.6Q13.1 0.4 13.1 1.9V3.5" fill="none" stroke="#0061a6" stroke-width="1.2"/><circle cx="2.5" cy="2.5" r="0.5" fill="#0061a6"/><circle cx="4.5" cy="2.5" r="0.5" fill="#0061a6"/><circle cx="6.5" cy="2.5" r="0.5" fill="#0061a6"/><circle cx="8.5" cy="2.5" r="0.5" fill="#0061a6"/><circle cx="10.5" cy="2.5" r="0.5" fill="#0061a6"/><circle cx="2.5" cy="4.5" r="0.5" fill="#0061a6"/><circle cx="2.5" cy="6.5" r="0.5" fill="#0061a6"/><circle cx="2.5" cy="8.5" r="0.5" fill="#0061a6"/><circle cx="2.5" cy="10.5" r="0.5" fill="#0061a6"/><circle cx="4.5" cy="4.5" r="0.5" fill="#0061a6"/><circle cx="9" cy="8.8" r="4.5" fill="none" stroke="#0061a6" stroke-width="1.2"/><line x1="12.3" y1="12.3" x2="15" y2="15.2" stroke="#0061a6" stroke-width="1.2"/></svg>
<div style="position:absolute;left:73.4px;top:806.70px;font-size:13px;line-height:15.60px;font-weight:400;color:#343741;white-space:nowrap;;letter-spacing:-0.235px;">cloud.availability_zone</div>
<div style="position:absolute;left:446.4px;top:806.70px;font-size:13px;line-height:15.60px;font-weight:400;color:#343741;white-space:nowrap;;letter-spacing:0.255px;">us-central1-c</div>
<div style="position:absolute;left:967.8px;top:806.70px;font-size:13px;line-height:15.60px;font-weight:400;color:#343741;white-space:nowrap;;letter-spacing:0.338px;">323000</div>
<div style="position:absolute;left:1087.6px;top:806.70px;font-size:13px;line-height:15.60px;font-weight:400;color:#343741;white-space:nowrap;;letter-spacing:0.359px;">8.80e-52</div>
<div class="a" style="left:1207px;top:805px;width:45px;height:20px;border-radius:3px;background:#bd271e"></div>
<div style="position:absolute;left:1216px;top:807.64px;font-size:12px;line-height:14.40px;font-weight:700;color:#fff;white-space:nowrap;">High</div>
<svg class="a" style="left:1359px;top:813px;" width="16" height="4" viewBox="0 0 16 4"><rect x="0.6" y="0.6" width="2.8" height="2.8" fill="none" stroke="#5a606b" stroke-width="1.2"/><rect x="6.6" y="0.6" width="2.8" height="2.8" fill="none" stroke="#5a606b" stroke-width="1.2"/><rect x="12.6" y="0.6" width="2.8" height="2.8" fill="none" stroke="#5a606b" stroke-width="1.2"/></svg>
<div class="a" style="left:41px;top:864px;width:1342px;height:1px;background:#d3dae6"></div>
<svg class="a" style="left:53px;top:840px;" width="16" height="16" viewBox="0 0 16 16"><path d="M3.5 13.5H1.8Q0.5 13.5 0.5 12.2V1.9Q0.5 0.4 2 0.4H11.6Q13.1 0.4 13.1 1.9V3.5" fill="none" stroke="#0061a6" stroke-width="1.2"/><circle cx="2.5" cy="2.5" r="0.5" fill="#0061a6"/><circle cx="4.5" cy="2.5" r="0.5" fill="#0061a6"/><circle cx="6.5" cy="2.5" r="0.5" fill="#0061a6"/><circle cx="8.5" cy="2.5" r="0.5" fill="#0061a6"/><circle cx="10.5" cy="2.5" r="0.5" fill="#0061a6"/><circle cx="2.5" cy="4.5" r="0.5" fill="#0061a6"/><circle cx="2.5" cy="6.5" r="0.5" fill="#0061a6"/><circle cx="2.5" cy="8.5" r="0.5" fill="#0061a6"/><circle cx="2.5" cy="10.5" r="0.5" fill="#0061a6"/><circle cx="4.5" cy="4.5" r="0.5" fill="#0061a6"/><circle cx="9" cy="8.8" r="4.5" fill="none" stroke="#0061a6" stroke-width="1.2"/><line x1="12.3" y1="12.3" x2="15" y2="15.2" stroke="#0061a6" stroke-width="1.2"/></svg>
<div style="position:absolute;left:73.4px;top:839.70px;font-size:13px;line-height:15.60px;font-weight:400;color:#343741;white-space:nowrap;;letter-spacing:-0.163px;">kubernetes.node.name</div>
<div style="position:absolute;left:446.4px;top:839.70px;font-size:13px;line-height:15.60px;font-weight:400;color:#343741;white-space:nowrap;;letter-spacing:0.278px;">gk3-serverless-qa-oblt-pool-1-59ce1e3d-6lpf</div>
<div style="position:absolute;left:967.8px;top:839.70px;font-size:13px;line-height:15.60px;font-weight:400;color:#343741;white-space:nowrap;;letter-spacing:0.338px;">142800</div>
<div style="position:absolute;left:1087.6px;top:839.70px;font-size:13px;line-height:15.60px;font-weight:400;color:#343741;white-space:nowrap;;letter-spacing:0.359px;">5.64e-51</div>
<div class="a" style="left:1207px;top:838px;width:45px;height:20px;border-radius:3px;background:#bd271e"></div>
<div style="position:absolute;left:1216px;top:840.64px;font-size:12px;line-height:14.40px;font-weight:700;color:#fff;white-space:nowrap;">High</div>
<svg class="a" style="left:1359px;top:846px;" width="16" height="4" viewBox="0 0 16 4"><rect x="0.6" y="0.6" width="2.8" height="2.8" fill="none" stroke="#5a606b" stroke-width="1.2"/><rect x="6.6" y="0.6" width="2.8" height="2.8" fill="none" stroke="#5a606b" stroke-width="1.2"/><rect x="12.6" y="0.6" width="2.8" height="2.8" fill="none" stroke="#5a606b" stroke-width="1.2"/></svg>
<div class="a" style="left:41px;top:897px;width:1342px;height:1px;background:#d3dae6"></div>
<svg class="a" style="left:53px;top:873px;" width="16" height="16" viewBox="0 0 16 16"><path d="M3.5 13.5H1.8Q0.5 13.5 0.5 12.2V1.9Q0.5 0.4 2 0.4H11.6Q13.1 0.4 13.1 1.9V3.5" fill="none" stroke="#0061a6" stroke-width="1.2"/><circle cx="2.5" cy="2.5" r="0.5" fill="#0061a6"/><circle cx="4.5" cy="2.5" r="0.5" fill="#0061a6"/><circle cx="6.5" cy="2.5" r="0.5" fill="#0061a6"/><circle cx="8.5" cy="2.5" r="0.5" fill="#0061a6"/><circle cx="10.5" cy="2.5" r="0.5" fill="#0061a6"/><circle cx="2.5" cy="4.5" r="0.5" fill="#0061a6"/><circle cx="2.5" cy="6.5" r="0.5" fill="#0061a6"/><circle cx="2.5" cy="8.5" r="0.5" fill="#0061a6"/><circle cx="2.5" cy="10.5" r="0.5" fill="#0061a6"/><circle cx="4.5" cy="4.5" r="0.5" fill="#0061a6"/><circle cx="9" cy="8.8" r="4.5" fill="none" stroke="#0061a6" stroke-width="1.2"/><line x1="12.3" y1="12.3" x2="15" y2="15.2" stroke="#0061a6" stroke-width="1.2"/></svg>
<div style="position:absolute;left:73.4px;top:872.70px;font-size:13px;line-height:15.60px;font-weight:400;color:#343741;white-space:nowrap;;letter-spacing:-0.264px;">host.name</div>
<div style="position:absolute;left:446.4px;top:872.70px;font-size:13px;line-height:15.60px;font-weight:400;color:#343741;white-space:nowrap;;letter-spacing:0.181px;">autopilot-integration-9w8sr</div>
<div style="position:absolute;left:967.8px;top:872.70px;font-size:13px;line-height:15.60px;font-weight:400;color:#343741;white-space:nowrap;;letter-spacing:0.338px;">144000</div>
<div style="position:absolute;left:1087.6px;top:872.70px;font-size:13px;line-height:15.60px;font-weight:400;color:#343741;white-space:nowrap;;letter-spacing:0.359px;">3.69e-50</div>
<div class="a" style="left:1207px;top:871px;width:45px;height:20px;border-radius:3px;background:#bd271e"></div>
<div style="position:absolute;left:1216px;top:873.64px;font-size:12px;line-height:14.40px;font-weight:700;color:#fff;white-space:nowrap;">High</div>
<svg class="a" style="left:1359px;top:879px;" width="16" height="4" viewBox="0 0 16 4"><rect x="0.6" y="0.6" width="2.8" height="2.8" fill="none" stroke="#5a606b" stroke-width="1.2"/><rect x="6.6" y="0.6" width="2.8" height="2.8" fill="none" stroke="#5a606b" stroke-width="1.2"/><rect x="12.6" y="0.6" width="2.8" height="2.8" fill="none" stroke="#5a606b" stroke-width="1.2"/></svg>
<div class="a" style="left:41px;top:930px;width:1342px;height:1px;background:#d3dae6"></div>
<svg class="a" style="left:53px;top:906px;" width="16" height="16" viewBox="0 0 16 16"><path d="M3.5 13.5H1.8Q0.5 13.5 0.5 12.2V1.9Q0.5 0.4 2 0.4H11.6Q13.1 0.4 13.1 1.9V3.5" fill="none" stroke="#0061a6" stroke-width="1.2"/><circle cx="2.5" cy="2.5" r="0.5" fill="#0061a6"/><circle cx="4.5" cy="2.5" r="0.5" fill="#0061a6"/><circle cx="6.5" cy="2.5" r="0.5" fill="#0061a6"/><circle cx="8.5" cy="2.5" r="0.5" fill="#0061a6"/><circle cx="10.5" cy="2.5" r="0.5" fill="#0061a6"/><circle cx="2.5" cy="4.5" r="0.5" fill="#0061a6"/><circle cx="2.5" cy="6.5" r="0.5" fill="#0061a6"/><circle cx="2.5" cy="8.5" r="0.5" fill="#0061a6"/><circle cx="2.5" cy="10.5" r="0.5" fill="#0061a6"/><circle cx="4.5" cy="4.5" r="0.5" fill="#0061a6"/><circle cx="9" cy="8.8" r="4.5" fill="none" stroke="#0061a6" stroke-width="1.2"/><line x1="12.3" y1="12.3" x2="15" y2="15.2" stroke="#0061a6" stroke-width="1.2"/></svg>
<div style="position:absolute;left:73.4px;top:905.70px;font-size:13px;line-height:15.60px;font-weight:400;color:#343741;white-space:nowrap;;letter-spacing:-0.282px;">agent.name</div>
<div style="position:absolute;left:446.4px;top:905.70px;font-size:13px;line-height:15.60px;font-weight:400;color:#343741;white-space:nowrap;;letter-spacing:0.181px;">autopilot-integration-9w8sr</div>
<div style="position:absolute;left:967.8px;top:905.70px;font-size:13px;line-height:15.60px;font-weight:400;color:#343741;white-space:nowrap;;letter-spacing:0.338px;">144000</div>
<div style="position:absolute;left:1087.6px;top:905.70px;font-size:13px;line-height:15.60px;font-weight:400;color:#343741;white-space:nowrap;;letter-spacing:0.359px;">3.69e-50</div>
<div class="a" style="left:1207px;top:904px;width:45px;height:20px;border-radius:3px;background:#bd271e"></div>
<div style="position:absolute;left:1216px;top:906.64px;font-size:12px;line-height:14.40px;font-weight:700;color:#fff;white-space:nowrap;">High</div>
<svg class="a" style="left:1359px;top:912px;" width="16" height="4" viewBox="0 0 16 4"><rect x="0.6" y="0.6" width="2.8" height="2.8" fill="none" stroke="#5a606b" stroke-width="1.2"/><rect x="6.6" y="0.6" width="2.8" height="2.8" fill="none" stroke="#5a606b" stroke-width="1.2"/><rect x="12.6" y="0.6" width="2.8" height="2.8" fill="none" stroke="#5a606b" stroke-width="1.2"/></svg>
<div class="a" style="left:41px;top:963px;width:1342px;height:1px;background:#d3dae6"></div>
<svg class="a" style="left:53px;top:939px;" width="16" height="16" viewBox="0 0 16 16"><path d="M3.5 13.5H1.8Q0.5 13.5 0.5 12.2V1.9Q0.5 0.4 2 0.4H11.6Q13.1 0.4 13.1 1.9V3.5" fill="none" stroke="#0061a6" stroke-width="1.2"/><circle cx="2.5" cy="2.5" r="0.5" fill="#0061a6"/><circle cx="4.5" cy="2.5" r="0.5" fill="#0061a6"/><circle cx="6.5" cy="2.5" r="0.5" fill="#0061a6"/><circle cx="8.5" cy="2.5" r="0.5" fill="#0061a6"/><circle cx="10.5" cy="2.5" r="0.5" fill="#0061a6"/><circle cx="2.5" cy="4.5" r="0.5" fill="#0061a6"/><circle cx="2.5" cy="6.5" r="0.5" fill="#0061a6"/><circle cx="2.5" cy="8.5" r="0.5" fill="#0061a6"/><circle cx="2.5" cy="10.5" r="0.5" fill="#0061a6"/><circle cx="4.5" cy="4.5" r="0.5" fill="#0061a6"/><circle cx="9" cy="8.8" r="4.5" fill="none" stroke="#0061a6" stroke-width="1.2"/><line x1="12.3" y1="12.3" x2="15" y2="15.2" stroke="#0061a6" stroke-width="1.2"/></svg>
<div style="position:absolute;left:73.4px;top:938.70px;font-size:13px;line-height:15.60px;font-weight:400;color:#343741;white-space:nowrap;;letter-spacing:-0.140px;">host.hostname</div>
<div style="position:absolute;left:446.4px;top:938.70px;font-size:13px;line-height:15.60px;font-weight:400;color:#343741;white-space:nowrap;;letter-spacing:0.181px;">autopilot-integration-9w8sr</div>
<div style="position:absolute;left:967.8px;top:938.70px;font-size:13px;line-height:15.60px;font-weight:400;color:#343741;white-space:nowrap;;letter-spacing:0.338px;">144000</div>
<div style="position:absolute;left:1087.6px;top:938.70px;font-size:13px;line-height:15.60px;font-weight:400;color:#343741;white-space:nowrap;;letter-spacing:0.359px;">3.69e-50</div>
<div class="a" style="left:1207px;top:937px;width:45px;height:20px;border-radius:3px;background:#bd271e"></div>
<div style="position:absolute;left:1216px;top:939.64px;font-size:12px;line-height:14.40px;font-weight:700;color:#fff;white-space:nowrap;">High</div>
<svg class="a" style="left:1359px;top:945px;" width="16" height="4" viewBox="0 0 16 4"><rect x="0.6" y="0.6" width="2.8" height="2.8" fill="none" stroke="#5a606b" stroke-width="1.2"/><rect x="6.6" y="0.6" width="2.8" height="2.8" fill="none" stroke="#5a606b" stroke-width="1.2"/><rect x="12.6" y="0.6" width="2.8" height="2.8" fill="none" stroke="#5a606b" stroke-width="1.2"/></svg>
<svg class="a" style="left:0;top:0" width="1405" height="972"><rect x="847.00" y="655.82" width="3.75" height="5.88" fill="#54b399"/><rect x="851.00" y="648.33" width="3.75" height="4.34" fill="#ffa000"/><rect x="851.00" y="652.68" width="3.75" height="9.02" fill="#54b399"/><rect x="855.00" y="646.99" width="3.75" height="7.02" fill="#ffa000"/><rect x="855.00" y="654.01" width="3.75" height="7.69" fill="#54b399"/><rect x="859.00" y="643.99" width="3.75" height="8.02" fill="#ffa000"/><rect x="859.00" y="652.01" width="3.75" height="9.69" fill="#54b399"/><rect x="863.00" y="643.12" width="3.75" height="10.43" fill="#ffa000"/><rect x="863.00" y="653.54" width="3.75" height="8.16" fill="#54b399"/><rect x="867.00" y="637.97" width="3.75" height="14.04" fill="#ffa000"/><rect x="867.00" y="652.01" width="3.75" height="9.69" fill="#54b399"/><rect x="871.00" y="641.65" width="3.75" height="11.23" fill="#ffa000"/><rect x="871.00" y="652.88" width="3.75" height="8.82" fill="#54b399"/><rect x="875.00" y="639.11" width="3.75" height="13.57" fill="#ffa000"/><rect x="875.00" y="652.68" width="3.75" height="9.02" fill="#54b399"/><rect x="879.00" y="640.64" width="3.75" height="13.37" fill="#ffa000"/><rect x="879.00" y="654.01" width="3.75" height="7.69" fill="#54b399"/><rect x="883.00" y="639.51" width="3.75" height="13.37" fill="#ffa000"/><rect x="883.00" y="652.88" width="3.75" height="8.82" fill="#54b399"/><rect x="887.00" y="638.64" width="3.75" height="15.37" fill="#ffa000"/><rect x="887.00" y="654.01" width="3.75" height="7.69" fill="#54b399"/><rect x="891.00" y="641.31" width="3.75" height="11.70" fill="#ffa000"/><rect x="891.00" y="653.01" width="3.75" height="8.69" fill="#54b399"/><rect x="895.00" y="639.31" width="3.75" height="13.57" fill="#ffa000"/><rect x="895.00" y="652.88" width="3.75" height="8.82" fill="#54b399"/><rect x="899.00" y="640.18" width="3.75" height="11.83" fill="#ffa000"/><rect x="899.00" y="652.01" width="3.75" height="9.69" fill="#54b399"/><rect x="903.00" y="643.99" width="3.75" height="10.03" fill="#ffa000"/><rect x="903.00" y="654.01" width="3.75" height="7.69" fill="#54b399"/><rect x="907.00" y="640.98" width="3.75" height="13.70" fill="#ffa000"/><rect x="907.00" y="654.68" width="3.75" height="7.02" fill="#54b399"/><rect x="911.00" y="639.77" width="3.75" height="14.10" fill="#ffa000"/><rect x="911.00" y="653.88" width="3.75" height="7.82" fill="#54b399"/><rect x="915.00" y="638.97" width="3.75" height="14.91" fill="#ffa000"/><rect x="915.00" y="653.88" width="3.75" height="7.82" fill="#54b399"/><rect x="919.00" y="643.32" width="3.75" height="10.03" fill="#ffa000"/><rect x="919.00" y="653.34" width="3.75" height="8.36" fill="#54b399"/><rect x="923.00" y="660.70" width="4" height="1" fill="#54b399"/><rect x="847.00" y="688.82" width="3.75" height="5.88" fill="#54b399"/><rect x="851.00" y="681.33" width="3.75" height="13.37" fill="#54b399"/><rect x="855.00" y="679.99" width="3.75" height="14.71" fill="#54b399"/><rect x="859.00" y="676.99" width="3.75" height="17.71" fill="#54b399"/><rect x="863.00" y="676.12" width="3.75" height="2.87" fill="#ffa000"/><rect x="863.00" y="678.99" width="3.75" height="15.71" fill="#54b399"/><rect x="867.00" y="670.97" width="3.75" height="7.02" fill="#ffa000"/><rect x="867.00" y="677.99" width="3.75" height="16.71" fill="#54b399"/><rect x="871.00" y="674.65" width="3.75" height="5.15" fill="#ffa000"/><rect x="871.00" y="679.79" width="3.75" height="14.91" fill="#54b399"/><rect x="875.00" y="672.11" width="3.75" height="5.21" fill="#ffa000"/><rect x="875.00" y="677.32" width="3.75" height="17.38" fill="#54b399"/><rect x="879.00" y="673.64" width="3.75" height="6.35" fill="#ffa000"/><rect x="879.00" y="679.99" width="3.75" height="14.71" fill="#54b399"/><rect x="883.00" y="672.51" width="3.75" height="4.48" fill="#ffa000"/><rect x="883.00" y="676.99" width="3.75" height="17.71" fill="#54b399"/><rect x="887.00" y="671.64" width="3.75" height="6.02" fill="#ffa000"/><rect x="887.00" y="677.65" width="3.75" height="17.05" fill="#54b399"/><rect x="891.00" y="674.31" width="3.75" height="5.01" fill="#ffa000"/><rect x="891.00" y="679.33" width="3.75" height="15.37" fill="#54b399"/><rect x="895.00" y="672.31" width="3.75" height="6.35" fill="#ffa000"/><rect x="895.00" y="678.66" width="3.75" height="16.04" fill="#54b399"/><rect x="899.00" y="673.18" width="3.75" height="5.01" fill="#ffa000"/><rect x="899.00" y="678.19" width="3.75" height="16.51" fill="#54b399"/><rect x="903.00" y="676.99" width="3.75" height="5.88" fill="#ffa000"/><rect x="903.00" y="682.87" width="3.75" height="11.83" fill="#54b399"/><rect x="907.00" y="673.98" width="3.75" height="6.68" fill="#ffa000"/><rect x="907.00" y="680.66" width="3.75" height="14.04" fill="#54b399"/><rect x="911.00" y="672.77" width="3.75" height="5.88" fill="#ffa000"/><rect x="911.00" y="678.66" width="3.75" height="16.04" fill="#54b399"/><rect x="915.00" y="671.97" width="3.75" height="6.68" fill="#ffa000"/><rect x="915.00" y="678.66" width="3.75" height="16.04" fill="#54b399"/><rect x="919.00" y="676.32" width="3.75" height="2.34" fill="#ffa000"/><rect x="919.00" y="678.66" width="3.75" height="16.04" fill="#54b399"/><rect x="923.00" y="693.70" width="4" height="1" fill="#54b399"/><rect x="847.00" y="721.82" width="3.75" height="5.88" fill="#54b399"/><rect x="851.00" y="714.33" width="3.75" height="13.37" fill="#54b399"/><rect x="855.00" y="712.99" width="3.75" height="14.71" fill="#54b399"/><rect x="859.00" y="709.99" width="3.75" height="17.71" fill="#54b399"/><rect x="863.00" y="709.12" width="3.75" height="2.87" fill="#ffa000"/><rect x="863.00" y="711.99" width="3.75" height="15.71" fill="#54b399"/><rect x="867.00" y="703.97" width="3.75" height="7.02" fill="#ffa000"/><rect x="867.00" y="710.99" width="3.75" height="16.71" fill="#54b399"/><rect x="871.00" y="707.65" width="3.75" height="5.15" fill="#ffa000"/><rect x="871.00" y="712.79" width="3.75" height="14.91" fill="#54b399"/><rect x="875.00" y="705.11" width="3.75" height="5.21" fill="#ffa000"/><rect x="875.00" y="710.32" width="3.75" height="17.38" fill="#54b399"/><rect x="879.00" y="706.64" width="3.75" height="6.35" fill="#ffa000"/><rect x="879.00" y="712.99" width="3.75" height="14.71" fill="#54b399"/><rect x="883.00" y="705.51" width="3.75" height="4.48" fill="#ffa000"/><rect x="883.00" y="709.99" width="3.75" height="17.71" fill="#54b399"/><rect x="887.00" y="704.64" width="3.75" height="6.02" fill="#ffa000"/><rect x="887.00" y="710.65" width="3.75" height="17.05" fill="#54b399"/><rect x="891.00" y="707.31" width="3.75" height="5.01" fill="#ffa000"/><rect x="891.00" y="712.33" width="3.75" height="15.37" fill="#54b399"/><rect x="895.00" y="705.31" width="3.75" height="6.35" fill="#ffa000"/><rect x="895.00" y="711.66" width="3.75" height="16.04" fill="#54b399"/><rect x="899.00" y="706.18" width="3.75" height="5.01" fill="#ffa000"/><rect x="899.00" y="711.19" width="3.75" height="16.51" fill="#54b399"/><rect x="903.00" y="709.99" width="3.75" height="5.88" fill="#ffa000"/><rect x="903.00" y="715.87" width="3.75" height="11.83" fill="#54b399"/><rect x="907.00" y="706.98" width="3.75" height="6.68" fill="#ffa000"/><rect x="907.00" y="713.66" width="3.75" height="14.04" fill="#54b399"/><rect x="911.00" y="705.77" width="3.75" height="5.88" fill="#ffa000"/><rect x="911.00" y="711.66" width="3.75" height="16.04" fill="#54b399"/><rect x="915.00" y="704.97" width="3.75" height="6.68" fill="#ffa000"/><rect x="915.00" y="711.66" width="3.75" height="16.04" fill="#54b399"/><rect x="919.00" y="709.32" width="3.75" height="2.34" fill="#ffa000"/><rect x="919.00" y="711.66" width="3.75" height="16.04" fill="#54b399"/><rect x="923.00" y="726.70" width="4" height="1" fill="#54b399"/><rect x="847.00" y="754.82" width="3.75" height="1.87" fill="#ffa000"/><rect x="847.00" y="756.69" width="3.75" height="4.01" fill="#54b399"/><rect x="851.00" y="747.33" width="3.75" height="7.55" fill="#ffa000"/><rect x="851.00" y="754.88" width="3.75" height="5.82" fill="#54b399"/><rect x="855.00" y="745.99" width="3.75" height="9.56" fill="#ffa000"/><rect x="855.00" y="755.55" width="3.75" height="5.15" fill="#54b399"/><rect x="859.00" y="742.99" width="3.75" height="11.90" fill="#ffa000"/><rect x="859.00" y="754.88" width="3.75" height="5.82" fill="#54b399"/><rect x="863.00" y="742.12" width="3.75" height="13.24" fill="#ffa000"/><rect x="863.00" y="755.35" width="3.75" height="5.35" fill="#54b399"/><rect x="867.00" y="736.97" width="3.75" height="17.71" fill="#ffa000"/><rect x="867.00" y="754.68" width="3.75" height="6.02" fill="#54b399"/><rect x="871.00" y="740.65" width="3.75" height="14.24" fill="#ffa000"/><rect x="871.00" y="754.88" width="3.75" height="5.82" fill="#54b399"/><rect x="875.00" y="738.11" width="3.75" height="16.78" fill="#ffa000"/><rect x="875.00" y="754.88" width="3.75" height="5.82" fill="#54b399"/><rect x="879.00" y="739.64" width="3.75" height="15.71" fill="#ffa000"/><rect x="879.00" y="755.35" width="3.75" height="5.35" fill="#54b399"/><rect x="883.00" y="738.51" width="3.75" height="16.38" fill="#ffa000"/><rect x="883.00" y="754.88" width="3.75" height="5.82" fill="#54b399"/><rect x="887.00" y="737.64" width="3.75" height="18.18" fill="#ffa000"/><rect x="887.00" y="755.82" width="3.75" height="4.88" fill="#54b399"/><rect x="891.00" y="740.31" width="3.75" height="15.04" fill="#ffa000"/><rect x="891.00" y="755.35" width="3.75" height="5.35" fill="#54b399"/><rect x="895.00" y="738.31" width="3.75" height="16.71" fill="#ffa000"/><rect x="895.00" y="755.02" width="3.75" height="5.68" fill="#54b399"/><rect x="899.00" y="739.18" width="3.75" height="15.71" fill="#ffa000"/><rect x="899.00" y="754.88" width="3.75" height="5.82" fill="#54b399"/><rect x="903.00" y="742.99" width="3.75" height="12.57" fill="#ffa000"/><rect x="903.00" y="755.55" width="3.75" height="5.15" fill="#54b399"/><rect x="907.00" y="739.98" width="3.75" height="16.24" fill="#ffa000"/><rect x="907.00" y="756.22" width="3.75" height="4.48" fill="#54b399"/><rect x="911.00" y="738.77" width="3.75" height="16.58" fill="#ffa000"/><rect x="911.00" y="755.35" width="3.75" height="5.35" fill="#54b399"/><rect x="915.00" y="737.97" width="3.75" height="17.38" fill="#ffa000"/><rect x="915.00" y="755.35" width="3.75" height="5.35" fill="#54b399"/><rect x="919.00" y="742.32" width="3.75" height="12.83" fill="#ffa000"/><rect x="919.00" y="755.15" width="3.75" height="5.55" fill="#54b399"/><rect x="923.00" y="759.70" width="4" height="1" fill="#54b399"/><rect x="847.00" y="787.82" width="3.75" height="1.07" fill="#ffa000"/><rect x="847.00" y="788.89" width="3.75" height="4.81" fill="#54b399"/><rect x="851.00" y="780.33" width="3.75" height="1.67" fill="#ffa000"/><rect x="851.00" y="782.00" width="3.75" height="11.70" fill="#54b399"/><rect x="855.00" y="778.99" width="3.75" height="1.67" fill="#ffa000"/><rect x="855.00" y="780.67" width="3.75" height="13.03" fill="#54b399"/><rect x="859.00" y="775.99" width="3.75" height="2.01" fill="#ffa000"/><rect x="859.00" y="777.99" width="3.75" height="15.71" fill="#54b399"/><rect x="863.00" y="775.12" width="3.75" height="4.88" fill="#ffa000"/><rect x="863.00" y="780.00" width="3.75" height="13.70" fill="#54b399"/><rect x="867.00" y="769.97" width="3.75" height="8.36" fill="#ffa000"/><rect x="867.00" y="778.33" width="3.75" height="15.37" fill="#54b399"/><rect x="871.00" y="773.65" width="3.75" height="7.35" fill="#ffa000"/><rect x="871.00" y="781.00" width="3.75" height="12.70" fill="#54b399"/><rect x="875.00" y="771.11" width="3.75" height="6.89" fill="#ffa000"/><rect x="875.00" y="777.99" width="3.75" height="15.71" fill="#54b399"/><rect x="879.00" y="772.64" width="3.75" height="8.36" fill="#ffa000"/><rect x="879.00" y="781.00" width="3.75" height="12.70" fill="#54b399"/><rect x="883.00" y="771.51" width="3.75" height="6.48" fill="#ffa000"/><rect x="883.00" y="777.99" width="3.75" height="15.71" fill="#54b399"/><rect x="887.00" y="770.64" width="3.75" height="8.36" fill="#ffa000"/><rect x="887.00" y="778.99" width="3.75" height="14.71" fill="#54b399"/><rect x="891.00" y="773.31" width="3.75" height="7.35" fill="#ffa000"/><rect x="891.00" y="780.67" width="3.75" height="13.03" fill="#54b399"/><rect x="895.00" y="771.31" width="3.75" height="8.69" fill="#ffa000"/><rect x="895.00" y="780.00" width="3.75" height="13.70" fill="#54b399"/><rect x="899.00" y="772.18" width="3.75" height="6.82" fill="#ffa000"/><rect x="899.00" y="778.99" width="3.75" height="14.71" fill="#54b399"/><rect x="903.00" y="775.99" width="3.75" height="7.55" fill="#ffa000"/><rect x="903.00" y="783.54" width="3.75" height="10.16" fill="#54b399"/><rect x="907.00" y="772.98" width="3.75" height="7.89" fill="#ffa000"/><rect x="907.00" y="780.87" width="3.75" height="12.83" fill="#54b399"/><rect x="911.00" y="771.77" width="3.75" height="7.22" fill="#ffa000"/><rect x="911.00" y="778.99" width="3.75" height="14.71" fill="#54b399"/><rect x="915.00" y="770.97" width="3.75" height="8.02" fill="#ffa000"/><rect x="915.00" y="778.99" width="3.75" height="14.71" fill="#54b399"/><rect x="919.00" y="775.32" width="3.75" height="3.68" fill="#ffa000"/><rect x="919.00" y="778.99" width="3.75" height="14.71" fill="#54b399"/><rect x="923.00" y="792.70" width="4" height="1" fill="#54b399"/><rect x="847.00" y="820.82" width="3.75" height="1.87" fill="#ffa000"/><rect x="847.00" y="822.69" width="3.75" height="4.01" fill="#54b399"/><rect x="851.00" y="813.33" width="3.75" height="7.55" fill="#ffa000"/><rect x="851.00" y="820.88" width="3.75" height="5.82" fill="#54b399"/><rect x="855.00" y="811.99" width="3.75" height="9.56" fill="#ffa000"/><rect x="855.00" y="821.55" width="3.75" height="5.15" fill="#54b399"/><rect x="859.00" y="808.99" width="3.75" height="11.03" fill="#ffa000"/><rect x="859.00" y="820.02" width="3.75" height="6.68" fill="#54b399"/><rect x="863.00" y="808.12" width="3.75" height="12.77" fill="#ffa000"/><rect x="863.00" y="820.88" width="3.75" height="5.82" fill="#54b399"/><rect x="867.00" y="802.97" width="3.75" height="17.05" fill="#ffa000"/><rect x="867.00" y="820.02" width="3.75" height="6.68" fill="#54b399"/><rect x="871.00" y="806.65" width="3.75" height="14.24" fill="#ffa000"/><rect x="871.00" y="820.88" width="3.75" height="5.82" fill="#54b399"/><rect x="875.00" y="804.11" width="3.75" height="15.91" fill="#ffa000"/><rect x="875.00" y="820.02" width="3.75" height="6.68" fill="#54b399"/><rect x="879.00" y="805.64" width="3.75" height="15.71" fill="#ffa000"/><rect x="879.00" y="821.35" width="3.75" height="5.35" fill="#54b399"/><rect x="883.00" y="804.51" width="3.75" height="16.38" fill="#ffa000"/><rect x="883.00" y="820.88" width="3.75" height="5.82" fill="#54b399"/><rect x="887.00" y="803.64" width="3.75" height="17.91" fill="#ffa000"/><rect x="887.00" y="821.55" width="3.75" height="5.15" fill="#54b399"/><rect x="891.00" y="806.31" width="3.75" height="14.57" fill="#ffa000"/><rect x="891.00" y="820.88" width="3.75" height="5.82" fill="#54b399"/><rect x="895.00" y="804.31" width="3.75" height="16.58" fill="#ffa000"/><rect x="895.00" y="820.88" width="3.75" height="5.82" fill="#54b399"/><rect x="899.00" y="805.18" width="3.75" height="14.84" fill="#ffa000"/><rect x="899.00" y="820.02" width="3.75" height="6.68" fill="#54b399"/><rect x="903.00" y="808.99" width="3.75" height="12.57" fill="#ffa000"/><rect x="903.00" y="821.55" width="3.75" height="5.15" fill="#54b399"/><rect x="907.00" y="805.98" width="3.75" height="16.24" fill="#ffa000"/><rect x="907.00" y="822.22" width="3.75" height="4.48" fill="#54b399"/><rect x="911.00" y="804.77" width="3.75" height="17.05" fill="#ffa000"/><rect x="911.00" y="821.82" width="3.75" height="4.88" fill="#54b399"/><rect x="915.00" y="803.97" width="3.75" height="16.91" fill="#ffa000"/><rect x="915.00" y="820.88" width="3.75" height="5.82" fill="#54b399"/><rect x="919.00" y="808.32" width="3.75" height="12.57" fill="#ffa000"/><rect x="919.00" y="820.88" width="3.75" height="5.82" fill="#54b399"/><rect x="923.00" y="825.70" width="4" height="1" fill="#54b399"/><rect x="847.00" y="853.82" width="3.75" height="1.07" fill="#ffa000"/><rect x="847.00" y="854.89" width="3.75" height="4.81" fill="#54b399"/><rect x="851.00" y="846.33" width="3.75" height="1.67" fill="#ffa000"/><rect x="851.00" y="848.00" width="3.75" height="11.70" fill="#54b399"/><rect x="855.00" y="844.99" width="3.75" height="1.67" fill="#ffa000"/><rect x="855.00" y="846.67" width="3.75" height="13.03" fill="#54b399"/><rect x="859.00" y="841.99" width="3.75" height="2.01" fill="#ffa000"/><rect x="859.00" y="843.99" width="3.75" height="15.71" fill="#54b399"/><rect x="863.00" y="841.12" width="3.75" height="4.88" fill="#ffa000"/><rect x="863.00" y="846.00" width="3.75" height="13.70" fill="#54b399"/><rect x="867.00" y="835.97" width="3.75" height="8.36" fill="#ffa000"/><rect x="867.00" y="844.33" width="3.75" height="15.37" fill="#54b399"/><rect x="871.00" y="839.65" width="3.75" height="7.35" fill="#ffa000"/><rect x="871.00" y="847.00" width="3.75" height="12.70" fill="#54b399"/><rect x="875.00" y="837.11" width="3.75" height="6.89" fill="#ffa000"/><rect x="875.00" y="843.99" width="3.75" height="15.71" fill="#54b399"/><rect x="879.00" y="838.64" width="3.75" height="8.36" fill="#ffa000"/><rect x="879.00" y="847.00" width="3.75" height="12.70" fill="#54b399"/><rect x="883.00" y="837.51" width="3.75" height="6.48" fill="#ffa000"/><rect x="883.00" y="843.99" width="3.75" height="15.71" fill="#54b399"/><rect x="887.00" y="836.64" width="3.75" height="8.36" fill="#ffa000"/><rect x="887.00" y="844.99" width="3.75" height="14.71" fill="#54b399"/><rect x="891.00" y="839.31" width="3.75" height="7.35" fill="#ffa000"/><rect x="891.00" y="846.67" width="3.75" height="13.03" fill="#54b399"/><rect x="895.00" y="837.31" width="3.75" height="8.69" fill="#ffa000"/><rect x="895.00" y="846.00" width="3.75" height="13.70" fill="#54b399"/><rect x="899.00" y="838.18" width="3.75" height="6.82" fill="#ffa000"/><rect x="899.00" y="844.99" width="3.75" height="14.71" fill="#54b399"/><rect x="903.00" y="841.99" width="3.75" height="7.55" fill="#ffa000"/><rect x="903.00" y="849.54" width="3.75" height="10.16" fill="#54b399"/><rect x="907.00" y="838.98" width="3.75" height="7.89" fill="#ffa000"/><rect x="907.00" y="846.87" width="3.75" height="12.83" fill="#54b399"/><rect x="911.00" y="837.77" width="3.75" height="7.22" fill="#ffa000"/><rect x="911.00" y="844.99" width="3.75" height="14.71" fill="#54b399"/><rect x="915.00" y="836.97" width="3.75" height="8.02" fill="#ffa000"/><rect x="915.00" y="844.99" width="3.75" height="14.71" fill="#54b399"/><rect x="919.00" y="841.32" width="3.75" height="3.68" fill="#ffa000"/><rect x="919.00" y="844.99" width="3.75" height="14.71" fill="#54b399"/><rect x="923.00" y="858.70" width="4" height="1" fill="#54b399"/><rect x="847.00" y="886.82" width="3.75" height="1.07" fill="#ffa000"/><rect x="847.00" y="887.89" width="3.75" height="4.81" fill="#54b399"/><rect x="851.00" y="879.33" width="3.75" height="1.67" fill="#ffa000"/><rect x="851.00" y="881.00" width="3.75" height="11.70" fill="#54b399"/><rect x="855.00" y="877.99" width="3.75" height="1.67" fill="#ffa000"/><rect x="855.00" y="879.67" width="3.75" height="13.03" fill="#54b399"/><rect x="859.00" y="874.99" width="3.75" height="2.01" fill="#ffa000"/><rect x="859.00" y="876.99" width="3.75" height="15.71" fill="#54b399"/><rect x="863.00" y="874.12" width="3.75" height="4.88" fill="#ffa000"/><rect x="863.00" y="879.00" width="3.75" height="13.70" fill="#54b399"/><rect x="867.00" y="868.97" width="3.75" height="8.36" fill="#ffa000"/><rect x="867.00" y="877.33" width="3.75" height="15.37" fill="#54b399"/><rect x="871.00" y="872.65" width="3.75" height="7.35" fill="#ffa000"/><rect x="871.00" y="880.00" width="3.75" height="12.70" fill="#54b399"/><rect x="875.00" y="870.11" width="3.75" height="6.89" fill="#ffa000"/><rect x="875.00" y="876.99" width="3.75" height="15.71" fill="#54b399"/><rect x="879.00" y="871.64" width="3.75" height="8.36" fill="#ffa000"/><rect x="879.00" y="880.00" width="3.75" height="12.70" fill="#54b399"/><rect x="883.00" y="870.51" width="3.75" height="6.48" fill="#ffa000"/><rect x="883.00" y="876.99" width="3.75" height="15.71" fill="#54b399"/><rect x="887.00" y="869.64" width="3.75" height="8.36" fill="#ffa000"/><rect x="887.00" y="877.99" width="3.75" height="14.71" fill="#54b399"/><rect x="891.00" y="872.31" width="3.75" height="7.35" fill="#ffa000"/><rect x="891.00" y="879.67" width="3.75" height="13.03" fill="#54b399"/><rect x="895.00" y="870.31" width="3.75" height="8.69" fill="#ffa000"/><rect x="895.00" y="879.00" width="3.75" height="13.70" fill="#54b399"/><rect x="899.00" y="871.18" width="3.75" height="6.82" fill="#ffa000"/><rect x="899.00" y="877.99" width="3.75" height="14.71" fill="#54b399"/><rect x="903.00" y="874.99" width="3.75" height="7.55" fill="#ffa000"/><rect x="903.00" y="882.54" width="3.75" height="10.16" fill="#54b399"/><rect x="907.00" y="871.98" width="3.75" height="7.89" fill="#ffa000"/><rect x="907.00" y="879.87" width="3.75" height="12.83" fill="#54b399"/><rect x="911.00" y="870.77" width="3.75" height="7.22" fill="#ffa000"/><rect x="911.00" y="877.99" width="3.75" height="14.71" fill="#54b399"/><rect x="915.00" y="869.97" width="3.75" height="8.02" fill="#ffa000"/><rect x="915.00" y="877.99" width="3.75" height="14.71" fill="#54b399"/><rect x="919.00" y="874.32" width="3.75" height="3.68" fill="#ffa000"/><rect x="919.00" y="877.99" width="3.75" height="14.71" fill="#54b399"/><rect x="923.00" y="891.70" width="4" height="1" fill="#54b399"/><rect x="847.00" y="919.82" width="3.75" height="1.07" fill="#ffa000"/><rect x="847.00" y="920.89" width="3.75" height="4.81" fill="#54b399"/><rect x="851.00" y="912.33" width="3.75" height="1.67" fill="#ffa000"/><rect x="851.00" y="914.00" width="3.75" height="11.70" fill="#54b399"/><rect x="855.00" y="910.99" width="3.75" height="1.67" fill="#ffa000"/><rect x="855.00" y="912.67" width="3.75" height="13.03" fill="#54b399"/><rect x="859.00" y="907.99" width="3.75" height="2.01" fill="#ffa000"/><rect x="859.00" y="909.99" width="3.75" height="15.71" fill="#54b399"/><rect x="863.00" y="907.12" width="3.75" height="4.88" fill="#ffa000"/><rect x="863.00" y="912.00" width="3.75" height="13.70" fill="#54b399"/><rect x="867.00" y="901.97" width="3.75" height="8.36" fill="#ffa000"/><rect x="867.00" y="910.33" width="3.75" height="15.37" fill="#54b399"/><rect x="871.00" y="905.65" width="3.75" height="7.35" fill="#ffa000"/><rect x="871.00" y="913.00" width="3.75" height="12.70" fill="#54b399"/><rect x="875.00" y="903.11" width="3.75" height="6.89" fill="#ffa000"/><rect x="875.00" y="909.99" width="3.75" height="15.71" fill="#54b399"/><rect x="879.00" y="904.64" width="3.75" height="8.36" fill="#ffa000"/><rect x="879.00" y="913.00" width="3.75" height="12.70" fill="#54b399"/><rect x="883.00" y="903.51" width="3.75" height="6.48" fill="#ffa000"/><rect x="883.00" y="909.99" width="3.75" height="15.71" fill="#54b399"/><rect x="887.00" y="902.64" width="3.75" height="8.36" fill="#ffa000"/><rect x="887.00" y="910.99" width="3.75" height="14.71" fill="#54b399"/><rect x="891.00" y="905.31" width="3.75" height="7.35" fill="#ffa000"/><rect x="891.00" y="912.67" width="3.75" height="13.03" fill="#54b399"/><rect x="895.00" y="903.31" width="3.75" height="8.69" fill="#ffa000"/><rect x="895.00" y="912.00" width="3.75" height="13.70" fill="#54b399"/><rect x="899.00" y="904.18" width="3.75" height="6.82" fill="#ffa000"/><rect x="899.00" y="910.99" width="3.75" height="14.71" fill="#54b399"/><rect x="903.00" y="907.99" width="3.75" height="7.55" fill="#ffa000"/><rect x="903.00" y="915.54" width="3.75" height="10.16" fill="#54b399"/><rect x="907.00" y="904.98" width="3.75" height="7.89" fill="#ffa000"/><rect x="907.00" y="912.87" width="3.75" height="12.83" fill="#54b399"/><rect x="911.00" y="903.77" width="3.75" height="7.22" fill="#ffa000"/><rect x="911.00" y="910.99" width="3.75" height="14.71" fill="#54b399"/><rect x="915.00" y="902.97" width="3.75" height="8.02" fill="#ffa000"/><rect x="915.00" y="910.99" width="3.75" height="14.71" fill="#54b399"/><rect x="919.00" y="907.32" width="3.75" height="3.68" fill="#ffa000"/><rect x="919.00" y="910.99" width="3.75" height="14.71" fill="#54b399"/><rect x="923.00" y="924.70" width="4" height="1" fill="#54b399"/><rect x="847.00" y="952.82" width="3.75" height="1.07" fill="#ffa000"/><rect x="847.00" y="953.89" width="3.75" height="4.81" fill="#54b399"/><rect x="851.00" y="945.33" width="3.75" height="1.67" fill="#ffa000"/><rect x="851.00" y="947.00" width="3.75" height="11.70" fill="#54b399"/><rect x="855.00" y="943.99" width="3.75" height="1.67" fill="#ffa000"/><rect x="855.00" y="945.67" width="3.75" height="13.03" fill="#54b399"/><rect x="859.00" y="940.99" width="3.75" height="2.01" fill="#ffa000"/><rect x="859.00" y="942.99" width="3.75" height="15.71" fill="#54b399"/><rect x="863.00" y="940.12" width="3.75" height="4.88" fill="#ffa000"/><rect x="863.00" y="945.00" width="3.75" height="13.70" fill="#54b399"/><rect x="867.00" y="934.97" width="3.75" height="8.36" fill="#ffa000"/><rect x="867.00" y="943.33" width="3.75" height="15.37" fill="#54b399"/><rect x="871.00" y="938.65" width="3.75" height="7.35" fill="#ffa000"/><rect x="871.00" y="946.00" width="3.75" height="12.70" fill="#54b399"/><rect x="875.00" y="936.11" width="3.75" height="6.89" fill="#ffa000"/><rect x="875.00" y="942.99" width="3.75" height="15.71" fill="#54b399"/><rect x="879.00" y="937.64" width="3.75" height="8.36" fill="#ffa000"/><rect x="879.00" y="946.00" width="3.75" height="12.70" fill="#54b399"/><rect x="883.00" y="936.51" width="3.75" height="6.48" fill="#ffa000"/><rect x="883.00" y="942.99" width="3.75" height="15.71" fill="#54b399"/><rect x="887.00" y="935.64" width="3.75" height="8.36" fill="#ffa000"/><rect x="887.00" y="943.99" width="3.75" height="14.71" fill="#54b399"/><rect x="891.00" y="938.31" width="3.75" height="7.35" fill="#ffa000"/><rect x="891.00" y="945.67" width="3.75" height="13.03" fill="#54b399"/><rect x="895.00" y="936.31" width="3.75" height="8.69" fill="#ffa000"/><rect x="895.00" y="945.00" width="3.75" height="13.70" fill="#54b399"/><rect x="899.00" y="937.18" width="3.75" height="6.82" fill="#ffa000"/><rect x="899.00" y="943.99" width="3.75" height="14.71" fill="#54b399"/><rect x="903.00" y="940.99" width="3.75" height="7.55" fill="#ffa000"/><rect x="903.00" y="948.54" width="3.75" height="10.16" fill="#54b399"/><rect x="907.00" y="937.98" width="3.75" height="7.89" fill="#ffa000"/><rect x="907.00" y="945.87" width="3.75" height="12.83" fill="#54b399"/><rect x="911.00" y="936.77" width="3.75" height="7.22" fill="#ffa000"/><rect x="911.00" y="943.99" width="3.75" height="14.71" fill="#54b399"/><rect x="915.00" y="935.97" width="3.75" height="8.02" fill="#ffa000"/><rect x="915.00" y="943.99" width="3.75" height="14.71" fill="#54b399"/><rect x="919.00" y="940.32" width="3.75" height="3.68" fill="#ffa000"/><rect x="919.00" y="943.99" width="3.75" height="14.71" fill="#54b399"/><rect x="923.00" y="957.70" width="4" height="1" fill="#54b399"/></svg>
</body></html>
